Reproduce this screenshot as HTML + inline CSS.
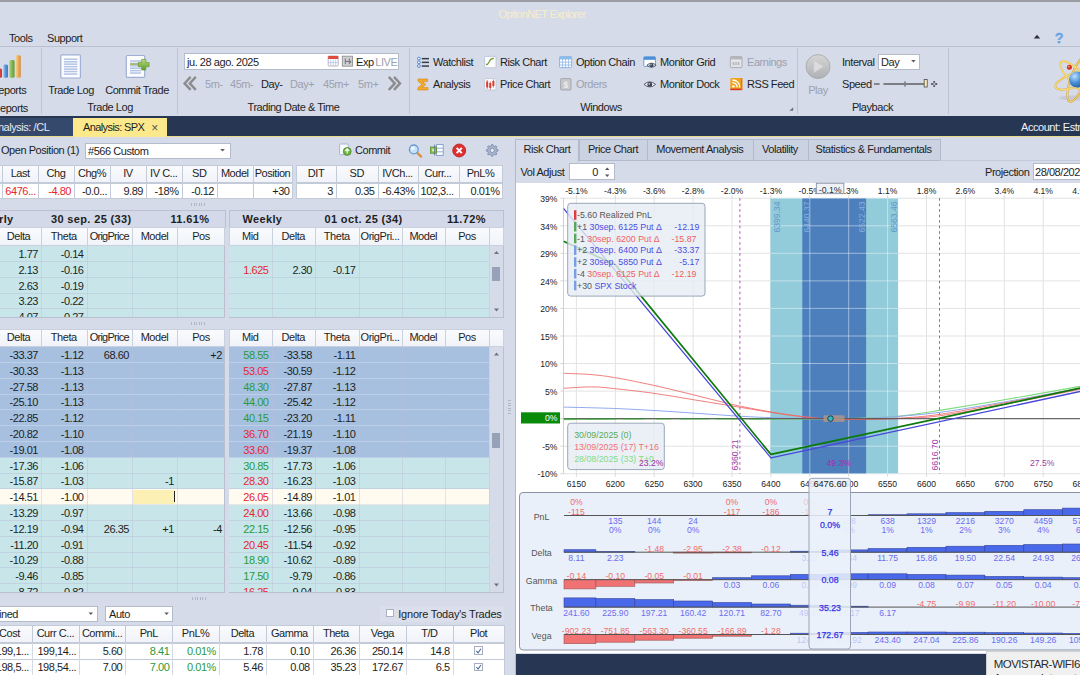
<!DOCTYPE html><html><head><meta charset="utf-8"><title>OptionNET Explorer</title><style>
html,body{margin:0;padding:0;}
body{width:1080px;height:675px;overflow:hidden;background:#d5dbe9;position:relative;
 font-family:"Liberation Sans",sans-serif;font-size:11px;color:#1e1e1e;letter-spacing:-0.45px;}
.r{position:absolute;box-sizing:border-box;}
.t{position:absolute;white-space:nowrap;line-height:14px;height:14px;margin-top:-7px;overflow:visible;}
.g{color:#9ba1af;}
.b{font-weight:bold;letter-spacing:0.35px;}
.red{color:#e6282e;}
.grn{color:#2c9a3c;}
.cell{position:absolute;box-sizing:border-box;overflow:hidden;white-space:nowrap;line-height:15px;}
svg{position:absolute;left:0;top:0;}
svg text{font-family:"Liberation Sans",sans-serif;letter-spacing:0;}
</style></head><body>
<div class="r " style="left:0px;top:0px;width:1080px;height:2px;background:#9c9ca4;"></div>
<div class="t " style="left:498.6px;top:14px;color:#f7eec6;letter-spacing:-.62px;">OptionNET Explorer</div>
<div class="t " style="left:9px;top:37.5px;">Tools</div>
<div class="t " style="left:47px;top:37.5px;">Support</div>
<div class="r " style="left:0px;top:46px;width:1080px;height:1px;background:#b9c0d0;"></div>
<div class="r " style="left:41px;top:48px;width:1px;height:66px;background:#bcc3d3;"></div>
<div class="r " style="left:177px;top:48px;width:1px;height:66px;background:#bcc3d3;"></div>
<div class="r " style="left:409px;top:48px;width:1px;height:66px;background:#bcc3d3;"></div>
<div class="r " style="left:797px;top:48px;width:1px;height:66px;background:#bcc3d3;"></div>
<div class="r " style="left:948px;top:48px;width:1px;height:66px;background:#bcc3d3;"></div>
<div class="t " style="left:-1.7px;top:90px;">eports</div>
<div class="t " style="left:0px;top:107.5px;">eports</div>
<div class="t " style="left:71px;top:90px;width:0px;transform:translateX(-50%);width:auto;">Trade Log</div>
<div class="t " style="left:137px;top:90px;transform:translateX(-50%);">Commit Trade</div>
<div class="t " style="left:110px;top:107px;transform:translateX(-50%);">Trade Log</div>
<div class="t " style="left:293.5px;top:107px;transform:translateX(-50%);">Trading Date &amp; Time</div>
<div class="t " style="left:601px;top:107px;transform:translateX(-50%);">Windows</div>
<div class="t " style="left:872.5px;top:107px;transform:translateX(-50%);">Playback</div>
<div class="r " style="left:184px;top:53px;width:215px;height:17px;background:#fff;border:1px solid #b4bccb;"></div>
<div class="t " style="left:187px;top:61.5px;">ju. 28 ago. 2025</div>
<div class="t " style="left:356px;top:61.5px;">Exp</div>
<div class="t g" style="left:375.3px;top:61.5px;">LIVE</div>
<div class="t g" style="left:205px;top:84px;">5m-</div>
<div class="t g" style="left:230px;top:84px;">45m-</div>
<div class="t " style="left:261px;top:84px;">Day-</div>
<div class="t g" style="left:290px;top:84px;">Day+</div>
<div class="t g" style="left:323px;top:84px;">45m+</div>
<div class="t g" style="left:358px;top:84px;">5m+</div>
<div class="t " style="left:433px;top:62px;">Watchlist</div>
<div class="t " style="left:500px;top:62px;">Risk Chart</div>
<div class="t " style="left:576px;top:62px;">Option Chain</div>
<div class="t " style="left:660px;top:62px;">Monitor Grid</div>
<div class="t g" style="left:747px;top:62px;">Earnings</div>
<div class="t " style="left:433px;top:84px;">Analysis</div>
<div class="t " style="left:500px;top:84px;">Price Chart</div>
<div class="t g" style="left:576px;top:84px;">Orders</div>
<div class="t " style="left:660px;top:84px;">Monitor Dock</div>
<div class="t " style="left:747px;top:84px;">RSS Feed</div>
<div class="t g" style="left:818px;top:90px;transform:translateX(-50%);">Play</div>
<div class="t " style="left:842px;top:62px;">Interval</div>
<div class="r " style="left:878px;top:54px;width:42px;height:16px;background:#fff;border:1px solid #b4bccb;"></div>
<div class="t " style="left:881px;top:62px;">Day</div>
<div class="t " style="left:842px;top:84px;">Speed</div>
<div class="r " style="left:0px;top:116px;width:1080px;height:20px;background:#273653;"></div>
<div class="r " style="left:0px;top:136px;width:1080px;height:1px;background:#e9d98a;"></div>
<div class="r " style="left:0px;top:117.5px;width:73px;height:18.5px;background:#35496d;"></div>
<div class="t " style="left:-9px;top:127px;color:#e6eaf2;">Analysis: /CL</div>
<div class="r " style="left:73px;top:117.5px;width:94px;height:19.5px;background:#fbe98c;"></div>
<div class="t " style="left:83px;top:127px;letter-spacing:-.6px">Analysis: SPX</div>
<div class="t " style="left:151.2px;top:127.6px;color:#555;font-size:12px;">×</div>
<div class="t " style="left:1021px;top:127px;color:#f0f2f6;">Account: Estr</div>
<div class="t " style="left:1px;top:150px;">Open Position (1)</div>
<div class="r " style="left:85px;top:142.5px;width:145.5px;height:16px;background:#fff;border:1px solid #b4bccb;"></div>
<div class="t " style="left:88px;top:150.5px;">#566 Custom</div>
<div class="t " style="left:355px;top:150px;">Commit</div>
<div class="r " style="left:-10px;top:165.3px;width:302.5px;height:17.899999999999977px;background:linear-gradient(#fafbfd,#f0f3f9);border:1px solid #c3cad8;"></div>
<div class="cell " style="left:-10px;top:165.3px;width:12.3px;height:17.299999999999983px;line-height:17.299999999999983px;text-align:center;"></div>
<div class="cell " style="left:2.3px;top:165.3px;width:35.7px;height:17.299999999999983px;line-height:17.299999999999983px;text-align:center;">Last</div>
<div class="cell " style="left:38px;top:165.3px;width:36px;height:17.299999999999983px;line-height:17.299999999999983px;text-align:center;">Chg</div>
<div class="cell " style="left:74px;top:165.3px;width:36px;height:17.299999999999983px;line-height:17.299999999999983px;text-align:center;">Chg%</div>
<div class="cell " style="left:110px;top:165.3px;width:36px;height:17.299999999999983px;line-height:17.299999999999983px;text-align:center;">IV</div>
<div class="cell " style="left:146px;top:165.3px;width:35.5px;height:17.299999999999983px;line-height:17.299999999999983px;text-align:center;">IV C...</div>
<div class="cell " style="left:181.5px;top:165.3px;width:35.5px;height:17.299999999999983px;line-height:17.299999999999983px;text-align:center;">SD</div>
<div class="cell " style="left:217px;top:165.3px;width:35.5px;height:17.299999999999983px;line-height:17.299999999999983px;text-align:center;">Model</div>
<div class="cell " style="left:252.5px;top:165.3px;width:40.0px;height:17.299999999999983px;line-height:17.299999999999983px;text-align:center;">Position</div>
<div class="r " style="left:2.3px;top:165.3px;width:1px;height:17.899999999999977px;background:#c3cad8;"></div>
<div class="r " style="left:38px;top:165.3px;width:1px;height:17.899999999999977px;background:#c3cad8;"></div>
<div class="r " style="left:74px;top:165.3px;width:1px;height:17.899999999999977px;background:#c3cad8;"></div>
<div class="r " style="left:110px;top:165.3px;width:1px;height:17.899999999999977px;background:#c3cad8;"></div>
<div class="r " style="left:146px;top:165.3px;width:1px;height:17.899999999999977px;background:#c3cad8;"></div>
<div class="r " style="left:181.5px;top:165.3px;width:1px;height:17.899999999999977px;background:#c3cad8;"></div>
<div class="r " style="left:217px;top:165.3px;width:1px;height:17.899999999999977px;background:#c3cad8;"></div>
<div class="r " style="left:252.5px;top:165.3px;width:1px;height:17.899999999999977px;background:#c3cad8;"></div>
<div class="r " style="left:-10px;top:182.7px;width:302.5px;height:16.2px;background:#fff;border:1px solid #c3cad8;"></div>
<div class="cell " style="left:-10px;top:183.6px;width:12.3px;height:15.800000000000011px;line-height:15.800000000000011px;text-align:;"></div>
<div class="cell red" style="left:2.3px;top:183.6px;width:35.7px;height:15.800000000000011px;line-height:15.800000000000011px;text-align:left;padding-left:3px;">6476...</div>
<div class="cell red" style="left:38px;top:183.6px;width:36px;height:15.800000000000011px;line-height:15.800000000000011px;text-align:right;padding-right:3px;">-4.80</div>
<div class="cell " style="left:74px;top:183.6px;width:36px;height:15.800000000000011px;line-height:15.800000000000011px;text-align:right;padding-right:3px;">-0.0...</div>
<div class="cell " style="left:110px;top:183.6px;width:36px;height:15.800000000000011px;line-height:15.800000000000011px;text-align:right;padding-right:3px;">9.89</div>
<div class="cell " style="left:146px;top:183.6px;width:35.5px;height:15.800000000000011px;line-height:15.800000000000011px;text-align:right;padding-right:3px;">-18%</div>
<div class="cell " style="left:181.5px;top:183.6px;width:35.5px;height:15.800000000000011px;line-height:15.800000000000011px;text-align:right;padding-right:3px;">-0.12</div>
<div class="cell " style="left:217px;top:183.6px;width:35.5px;height:15.800000000000011px;line-height:15.800000000000011px;text-align:right;padding-right:3px;"></div>
<div class="cell " style="left:252.5px;top:183.6px;width:40.0px;height:15.800000000000011px;line-height:15.800000000000011px;text-align:right;padding-right:3px;">+30</div>
<div class="r " style="left:2.3px;top:183px;width:1px;height:15.6px;background:#c3cad8;"></div>
<div class="r " style="left:38px;top:183px;width:1px;height:15.6px;background:#c3cad8;"></div>
<div class="r " style="left:74px;top:183px;width:1px;height:15.6px;background:#c3cad8;"></div>
<div class="r " style="left:110px;top:183px;width:1px;height:15.6px;background:#c3cad8;"></div>
<div class="r " style="left:146px;top:183px;width:1px;height:15.6px;background:#c3cad8;"></div>
<div class="r " style="left:181.5px;top:183px;width:1px;height:15.6px;background:#c3cad8;"></div>
<div class="r " style="left:217px;top:183px;width:1px;height:15.6px;background:#c3cad8;"></div>
<div class="r " style="left:252.5px;top:183px;width:1px;height:15.6px;background:#c3cad8;"></div>
<div class="r " style="left:296px;top:165.3px;width:206.5px;height:17.899999999999977px;background:linear-gradient(#fafbfd,#f0f3f9);border:1px solid #c3cad8;"></div>
<div class="cell " style="left:296px;top:165.3px;width:40px;height:17.299999999999983px;line-height:17.299999999999983px;text-align:center;">DIT</div>
<div class="cell " style="left:336px;top:165.3px;width:41.5px;height:17.299999999999983px;line-height:17.299999999999983px;text-align:center;">SD</div>
<div class="cell " style="left:377.5px;top:165.3px;width:40.0px;height:17.299999999999983px;line-height:17.299999999999983px;text-align:center;">IVCh...</div>
<div class="cell " style="left:417.5px;top:165.3px;width:41.0px;height:17.299999999999983px;line-height:17.299999999999983px;text-align:center;">Curr...</div>
<div class="cell " style="left:458.5px;top:165.3px;width:44.0px;height:17.299999999999983px;line-height:17.299999999999983px;text-align:center;">PnL%</div>
<div class="r " style="left:336px;top:165.3px;width:1px;height:17.899999999999977px;background:#c3cad8;"></div>
<div class="r " style="left:377.5px;top:165.3px;width:1px;height:17.899999999999977px;background:#c3cad8;"></div>
<div class="r " style="left:417.5px;top:165.3px;width:1px;height:17.899999999999977px;background:#c3cad8;"></div>
<div class="r " style="left:458.5px;top:165.3px;width:1px;height:17.899999999999977px;background:#c3cad8;"></div>
<div class="r " style="left:296px;top:182.7px;width:206.5px;height:16.2px;background:#fff;border:1px solid #c3cad8;"></div>
<div class="cell " style="left:296px;top:183.6px;width:40px;height:15.800000000000011px;line-height:15.800000000000011px;text-align:right;padding-right:3px;">3</div>
<div class="cell " style="left:336px;top:183.6px;width:41.5px;height:15.800000000000011px;line-height:15.800000000000011px;text-align:right;padding-right:3px;">0.35</div>
<div class="cell " style="left:377.5px;top:183.6px;width:40.0px;height:15.800000000000011px;line-height:15.800000000000011px;text-align:right;padding-right:3px;">-6.43%</div>
<div class="cell " style="left:417.5px;top:183.6px;width:41.0px;height:15.800000000000011px;line-height:15.800000000000011px;text-align:left;padding-left:3px;">102,3...</div>
<div class="cell " style="left:458.5px;top:183.6px;width:44.0px;height:15.800000000000011px;line-height:15.800000000000011px;text-align:right;padding-right:3px;">0.01%</div>
<div class="r " style="left:336px;top:183px;width:1px;height:15.6px;background:#c3cad8;"></div>
<div class="r " style="left:377.5px;top:183px;width:1px;height:15.6px;background:#c3cad8;"></div>
<div class="r " style="left:417.5px;top:183px;width:1px;height:15.6px;background:#c3cad8;"></div>
<div class="r " style="left:458.5px;top:183px;width:1px;height:15.6px;background:#c3cad8;"></div>
<div class="r " style="left:191px;top:202.5px;width:14px;height:3px;background:repeating-linear-gradient(90deg,#aab2c4 0 1px,transparent 1px 2.5px);opacity:.9;"></div>
<div class="r " style="left:191px;top:322.0px;width:14px;height:3px;background:repeating-linear-gradient(90deg,#aab2c4 0 1px,transparent 1px 2.5px);opacity:.9;"></div>
<div class="r " style="left:192px;top:596.5px;width:14px;height:3px;background:repeating-linear-gradient(90deg,#aab2c4 0 1px,transparent 1px 2.5px);opacity:.9;"></div>
<div class="r " style="left:508.0px;top:400px;width:3px;height:14px;background:repeating-linear-gradient(0deg,#aab2c4 0 1px,transparent 1px 2.5px);opacity:.9;"></div>
<div class="r " style="left:-4px;top:209.5px;width:229.5px;height:18.30000000000001px;background:#d3d9e8;border:1px solid #b9c0d0;"></div>
<div class="t b" style="left:-1px;top:219.15px;">rly</div>
<div class="t b" style="left:51px;top:219.15px;">30 sep. 25 (33)</div>
<div class="t b" style="left:170.5px;top:219.15px;">11.61%</div>
<div class="r " style="left:229px;top:209.5px;width:274.5px;height:18.30000000000001px;background:#d3d9e8;border:1px solid #b9c0d0;"></div>
<div class="t b" style="left:242.5px;top:219.15px;">Weekly</div>
<div class="t b" style="left:324.5px;top:219.15px;">01 oct. 25 (34)</div>
<div class="t b" style="left:447px;top:219.15px;">11.72%</div>
<div class="r " style="left:-4px;top:227.3px;width:229px;height:18.69999999999999px;background:linear-gradient(#fafbfd,#f0f3f9);border:1px solid #c9d0de;"></div>
<div class="cell " style="left:-4px;top:227.3px;width:45px;height:18.099999999999994px;line-height:18.099999999999994px;text-align:center;">Delta</div>
<div class="cell " style="left:41px;top:227.3px;width:45.5px;height:18.099999999999994px;line-height:18.099999999999994px;text-align:center;">Theta</div>
<div class="cell " style="left:86.5px;top:227.3px;width:45.5px;height:18.099999999999994px;line-height:18.099999999999994px;text-align:center;letter-spacing:-.75px;">OrigPrice</div>
<div class="cell " style="left:132px;top:227.3px;width:45px;height:18.099999999999994px;line-height:18.099999999999994px;text-align:center;">Model</div>
<div class="cell " style="left:177px;top:227.3px;width:48px;height:18.099999999999994px;line-height:18.099999999999994px;text-align:center;">Pos</div>
<div class="r " style="left:41px;top:227.3px;width:1px;height:18.69999999999999px;background:#c9d0de;"></div>
<div class="r " style="left:86.5px;top:227.3px;width:1px;height:18.69999999999999px;background:#c9d0de;"></div>
<div class="r " style="left:132px;top:227.3px;width:1px;height:18.69999999999999px;background:#c9d0de;"></div>
<div class="r " style="left:177px;top:227.3px;width:1px;height:18.69999999999999px;background:#c9d0de;"></div>
<div class="r " style="left:229px;top:227.3px;width:274.5px;height:18.69999999999999px;background:linear-gradient(#fafbfd,#f0f3f9);border:1px solid #c9d0de;"></div>
<div class="cell " style="left:229px;top:227.3px;width:42.5px;height:18.099999999999994px;line-height:18.099999999999994px;text-align:center;">Mid</div>
<div class="cell " style="left:271.5px;top:227.3px;width:43.5px;height:18.099999999999994px;line-height:18.099999999999994px;text-align:center;">Delta</div>
<div class="cell " style="left:315px;top:227.3px;width:43.5px;height:18.099999999999994px;line-height:18.099999999999994px;text-align:center;">Theta</div>
<div class="cell " style="left:358.5px;top:227.3px;width:43.0px;height:18.099999999999994px;line-height:18.099999999999994px;text-align:center;">OrigPri...</div>
<div class="cell " style="left:401.5px;top:227.3px;width:43.5px;height:18.099999999999994px;line-height:18.099999999999994px;text-align:center;">Model</div>
<div class="cell " style="left:445px;top:227.3px;width:44px;height:18.099999999999994px;line-height:18.099999999999994px;text-align:center;">Pos</div>
<div class="cell " style="left:489px;top:227.3px;width:14.5px;height:18.099999999999994px;line-height:18.099999999999994px;text-align:center;"></div>
<div class="r " style="left:271.5px;top:227.3px;width:1px;height:18.69999999999999px;background:#c9d0de;"></div>
<div class="r " style="left:315px;top:227.3px;width:1px;height:18.69999999999999px;background:#c9d0de;"></div>
<div class="r " style="left:358.5px;top:227.3px;width:1px;height:18.69999999999999px;background:#c9d0de;"></div>
<div class="r " style="left:401.5px;top:227.3px;width:1px;height:18.69999999999999px;background:#c9d0de;"></div>
<div class="r " style="left:445px;top:227.3px;width:1px;height:18.69999999999999px;background:#c9d0de;"></div>
<div class="r " style="left:489px;top:227.3px;width:1px;height:18.69999999999999px;background:#c9d0de;"></div>
<div class="r" style="left:-4px;top:246px;width:229px;height:71.5px;overflow:hidden;border-right:1px solid #b9c0d0;border-bottom:1px solid #b9c0d0;background:#c8e6ea;">
<div class="r" style="left:0;top:0.0px;width:229px;height:16.5px;background:#c8e6ea;"></div>
<div class="cell " style="left:0px;top:0.0px;width:45px;height:15.8px;line-height:16.2px;text-align:right;padding-right:3px;">1.77</div>
<div class="cell " style="left:45px;top:0.0px;width:45.5px;height:15.8px;line-height:16.2px;text-align:right;padding-right:3px;">-0.14</div>
<div class="r" style="left:0;top:15.8px;width:229px;height:16.5px;background:#c8e6ea;"></div>
<div class="cell " style="left:0px;top:15.8px;width:45px;height:15.8px;line-height:16.2px;text-align:right;padding-right:3px;">2.13</div>
<div class="cell " style="left:45px;top:15.8px;width:45.5px;height:15.8px;line-height:16.2px;text-align:right;padding-right:3px;">-0.16</div>
<div class="r" style="left:0;top:31.6px;width:229px;height:16.5px;background:#c8e6ea;"></div>
<div class="cell " style="left:0px;top:31.6px;width:45px;height:15.8px;line-height:16.2px;text-align:right;padding-right:3px;">2.63</div>
<div class="cell " style="left:45px;top:31.6px;width:45.5px;height:15.8px;line-height:16.2px;text-align:right;padding-right:3px;">-0.19</div>
<div class="r" style="left:0;top:47.4px;width:229px;height:16.5px;background:#c8e6ea;"></div>
<div class="cell " style="left:0px;top:47.4px;width:45px;height:15.8px;line-height:16.2px;text-align:right;padding-right:3px;">3.23</div>
<div class="cell " style="left:45px;top:47.4px;width:45.5px;height:15.8px;line-height:16.2px;text-align:right;padding-right:3px;">-0.22</div>
<div class="r" style="left:0;top:63.2px;width:229px;height:16.5px;background:#c8e6ea;"></div>
<div class="cell " style="left:0px;top:63.2px;width:45px;height:15.8px;line-height:16.2px;text-align:right;padding-right:3px;">4.07</div>
<div class="cell " style="left:45px;top:63.2px;width:45.5px;height:15.8px;line-height:16.2px;text-align:right;padding-right:3px;">-0.27</div>
<div class="r" style="left:0;top:15.0px;width:229px;height:1px;background:rgba(185,190,215,.5);"></div>
<div class="r" style="left:0;top:30.8px;width:229px;height:1px;background:rgba(185,190,215,.5);"></div>
<div class="r" style="left:0;top:46.6px;width:229px;height:1px;background:rgba(185,190,215,.5);"></div>
<div class="r" style="left:0;top:62.4px;width:229px;height:1px;background:rgba(185,190,215,.5);"></div>
<div class="r" style="left:0;top:78.2px;width:229px;height:1px;background:rgba(185,190,215,.5);"></div>
<div class="r" style="left:45px;top:0;width:1px;height:71.5px;background:rgba(190,190,215,.42);"></div>
<div class="r" style="left:90.5px;top:0;width:1px;height:71.5px;background:rgba(190,190,215,.42);"></div>
<div class="r" style="left:136px;top:0;width:1px;height:71.5px;background:rgba(190,190,215,.42);"></div>
<div class="r" style="left:181px;top:0;width:1px;height:71.5px;background:rgba(190,190,215,.42);"></div>
</div>
<div class="r" style="left:229px;top:246px;width:274.5px;height:71.5px;overflow:hidden;border-right:1px solid #b9c0d0;border-bottom:1px solid #b9c0d0;background:#c8e6ea;">
<div class="r" style="left:0;top:0.0px;width:260px;height:16.5px;background:#c8e6ea;"></div>
<div class="r" style="left:0;top:15.8px;width:260px;height:16.5px;background:#c8e6ea;"></div>
<div class="cell red" style="left:0px;top:15.8px;width:42.5px;height:15.8px;line-height:16.2px;text-align:right;padding-right:3px;">1.625</div>
<div class="cell " style="left:42.5px;top:15.8px;width:43.5px;height:15.8px;line-height:16.2px;text-align:right;padding-right:3px;">2.30</div>
<div class="cell " style="left:86px;top:15.8px;width:43.5px;height:15.8px;line-height:16.2px;text-align:right;padding-right:3px;">-0.17</div>
<div class="r" style="left:0;top:31.6px;width:260px;height:16.5px;background:#c8e6ea;"></div>
<div class="r" style="left:0;top:47.4px;width:260px;height:16.5px;background:#c8e6ea;"></div>
<div class="r" style="left:0;top:63.2px;width:260px;height:16.5px;background:#c8e6ea;"></div>
<div class="r" style="left:0;top:15.0px;width:260px;height:1px;background:rgba(185,190,215,.5);"></div>
<div class="r" style="left:0;top:30.8px;width:260px;height:1px;background:rgba(185,190,215,.5);"></div>
<div class="r" style="left:0;top:46.6px;width:260px;height:1px;background:rgba(185,190,215,.5);"></div>
<div class="r" style="left:0;top:62.4px;width:260px;height:1px;background:rgba(185,190,215,.5);"></div>
<div class="r" style="left:0;top:78.2px;width:260px;height:1px;background:rgba(185,190,215,.5);"></div>
<div class="r" style="left:42.5px;top:0;width:1px;height:71.5px;background:rgba(190,190,215,.42);"></div>
<div class="r" style="left:86px;top:0;width:1px;height:71.5px;background:rgba(190,190,215,.42);"></div>
<div class="r" style="left:129.5px;top:0;width:1px;height:71.5px;background:rgba(190,190,215,.42);"></div>
<div class="r" style="left:172.5px;top:0;width:1px;height:71.5px;background:rgba(190,190,215,.42);"></div>
<div class="r" style="left:216px;top:0;width:1px;height:71.5px;background:rgba(190,190,215,.42);"></div>
<div class="r" style="left:260px;top:0;width:1px;height:71.5px;background:rgba(190,190,215,.42);"></div>
<div class="r" style="left:261px;top:0;width:13.5px;height:71.5px;background:#d5dbe9;"></div>
</div>
<div class="r " style="left:-4px;top:328.5px;width:229px;height:18.5px;background:linear-gradient(#fafbfd,#f0f3f9);border:1px solid #c9d0de;"></div>
<div class="cell " style="left:-4px;top:328.5px;width:45px;height:17.899999999999977px;line-height:17.899999999999977px;text-align:center;">Delta</div>
<div class="cell " style="left:41px;top:328.5px;width:45.5px;height:17.899999999999977px;line-height:17.899999999999977px;text-align:center;">Theta</div>
<div class="cell " style="left:86.5px;top:328.5px;width:45.5px;height:17.899999999999977px;line-height:17.899999999999977px;text-align:center;letter-spacing:-.75px;">OrigPrice</div>
<div class="cell " style="left:132px;top:328.5px;width:45px;height:17.899999999999977px;line-height:17.899999999999977px;text-align:center;">Model</div>
<div class="cell " style="left:177px;top:328.5px;width:48px;height:17.899999999999977px;line-height:17.899999999999977px;text-align:center;">Pos</div>
<div class="r " style="left:41px;top:328.5px;width:1px;height:18.5px;background:#c9d0de;"></div>
<div class="r " style="left:86.5px;top:328.5px;width:1px;height:18.5px;background:#c9d0de;"></div>
<div class="r " style="left:132px;top:328.5px;width:1px;height:18.5px;background:#c9d0de;"></div>
<div class="r " style="left:177px;top:328.5px;width:1px;height:18.5px;background:#c9d0de;"></div>
<div class="r " style="left:229px;top:328.5px;width:274.5px;height:18.5px;background:linear-gradient(#fafbfd,#f0f3f9);border:1px solid #c9d0de;"></div>
<div class="cell " style="left:229px;top:328.5px;width:42.5px;height:17.899999999999977px;line-height:17.899999999999977px;text-align:center;">Mid</div>
<div class="cell " style="left:271.5px;top:328.5px;width:43.5px;height:17.899999999999977px;line-height:17.899999999999977px;text-align:center;">Delta</div>
<div class="cell " style="left:315px;top:328.5px;width:43.5px;height:17.899999999999977px;line-height:17.899999999999977px;text-align:center;">Theta</div>
<div class="cell " style="left:358.5px;top:328.5px;width:43.0px;height:17.899999999999977px;line-height:17.899999999999977px;text-align:center;">OrigPri...</div>
<div class="cell " style="left:401.5px;top:328.5px;width:43.5px;height:17.899999999999977px;line-height:17.899999999999977px;text-align:center;">Model</div>
<div class="cell " style="left:445px;top:328.5px;width:44px;height:17.899999999999977px;line-height:17.899999999999977px;text-align:center;">Pos</div>
<div class="cell " style="left:489px;top:328.5px;width:14.5px;height:17.899999999999977px;line-height:17.899999999999977px;text-align:center;"></div>
<div class="r " style="left:271.5px;top:328.5px;width:1px;height:18.5px;background:#c9d0de;"></div>
<div class="r " style="left:315px;top:328.5px;width:1px;height:18.5px;background:#c9d0de;"></div>
<div class="r " style="left:358.5px;top:328.5px;width:1px;height:18.5px;background:#c9d0de;"></div>
<div class="r " style="left:401.5px;top:328.5px;width:1px;height:18.5px;background:#c9d0de;"></div>
<div class="r " style="left:445px;top:328.5px;width:1px;height:18.5px;background:#c9d0de;"></div>
<div class="r " style="left:489px;top:328.5px;width:1px;height:18.5px;background:#c9d0de;"></div>
<div class="r" style="left:-4px;top:347px;width:229px;height:245.5px;overflow:hidden;border-right:1px solid #b9c0d0;border-bottom:1px solid #b9c0d0;background:#c8e6ea;">
<div class="r" style="left:0;top:0.0px;width:229px;height:16.5px;background:#a7c0e0;"></div>
<div class="cell " style="left:0px;top:0.0px;width:45px;height:15.8px;line-height:16.2px;text-align:right;padding-right:3px;">-33.37</div>
<div class="cell " style="left:45px;top:0.0px;width:45.5px;height:15.8px;line-height:16.2px;text-align:right;padding-right:3px;">-1.12</div>
<div class="cell " style="left:90.5px;top:0.0px;width:45.5px;height:15.8px;line-height:16.2px;text-align:right;padding-right:3px;">68.60</div>
<div class="cell " style="left:181px;top:0.0px;width:48px;height:15.8px;line-height:16.2px;text-align:right;padding-right:3px;">+2</div>
<div class="r" style="left:0;top:15.8px;width:229px;height:16.5px;background:#a7c0e0;"></div>
<div class="cell " style="left:0px;top:15.8px;width:45px;height:15.8px;line-height:16.2px;text-align:right;padding-right:3px;">-30.33</div>
<div class="cell " style="left:45px;top:15.8px;width:45.5px;height:15.8px;line-height:16.2px;text-align:right;padding-right:3px;">-1.13</div>
<div class="r" style="left:0;top:31.6px;width:229px;height:16.5px;background:#a7c0e0;"></div>
<div class="cell " style="left:0px;top:31.6px;width:45px;height:15.8px;line-height:16.2px;text-align:right;padding-right:3px;">-27.58</div>
<div class="cell " style="left:45px;top:31.6px;width:45.5px;height:15.8px;line-height:16.2px;text-align:right;padding-right:3px;">-1.13</div>
<div class="r" style="left:0;top:47.4px;width:229px;height:16.5px;background:#a7c0e0;"></div>
<div class="cell " style="left:0px;top:47.4px;width:45px;height:15.8px;line-height:16.2px;text-align:right;padding-right:3px;">-25.10</div>
<div class="cell " style="left:45px;top:47.4px;width:45.5px;height:15.8px;line-height:16.2px;text-align:right;padding-right:3px;">-1.13</div>
<div class="r" style="left:0;top:63.2px;width:229px;height:16.5px;background:#a7c0e0;"></div>
<div class="cell " style="left:0px;top:63.2px;width:45px;height:15.8px;line-height:16.2px;text-align:right;padding-right:3px;">-22.85</div>
<div class="cell " style="left:45px;top:63.2px;width:45.5px;height:15.8px;line-height:16.2px;text-align:right;padding-right:3px;">-1.12</div>
<div class="r" style="left:0;top:79.0px;width:229px;height:16.5px;background:#a7c0e0;"></div>
<div class="cell " style="left:0px;top:79.0px;width:45px;height:15.8px;line-height:16.2px;text-align:right;padding-right:3px;">-20.82</div>
<div class="cell " style="left:45px;top:79.0px;width:45.5px;height:15.8px;line-height:16.2px;text-align:right;padding-right:3px;">-1.10</div>
<div class="r" style="left:0;top:94.8px;width:229px;height:16.5px;background:#a7c0e0;"></div>
<div class="cell " style="left:0px;top:94.8px;width:45px;height:15.8px;line-height:16.2px;text-align:right;padding-right:3px;">-19.01</div>
<div class="cell " style="left:45px;top:94.8px;width:45.5px;height:15.8px;line-height:16.2px;text-align:right;padding-right:3px;">-1.08</div>
<div class="r" style="left:0;top:110.6px;width:229px;height:16.5px;background:#c8e6ea;"></div>
<div class="cell " style="left:0px;top:110.6px;width:45px;height:15.8px;line-height:16.2px;text-align:right;padding-right:3px;">-17.36</div>
<div class="cell " style="left:45px;top:110.6px;width:45.5px;height:15.8px;line-height:16.2px;text-align:right;padding-right:3px;">-1.06</div>
<div class="r" style="left:0;top:126.4px;width:229px;height:16.5px;background:#c8e6ea;"></div>
<div class="cell " style="left:0px;top:126.4px;width:45px;height:15.8px;line-height:16.2px;text-align:right;padding-right:3px;">-15.87</div>
<div class="cell " style="left:45px;top:126.4px;width:45.5px;height:15.8px;line-height:16.2px;text-align:right;padding-right:3px;">-1.03</div>
<div class="cell " style="left:136px;top:126.4px;width:45px;height:15.8px;line-height:16.2px;text-align:right;padding-right:3px;">-1</div>
<div class="r" style="left:0;top:142.2px;width:229px;height:16.5px;background:#fffbf0;"></div>
<div class="cell " style="left:0px;top:142.2px;width:45px;height:15.8px;line-height:16.2px;text-align:right;padding-right:3px;">-14.51</div>
<div class="cell " style="left:45px;top:142.2px;width:45.5px;height:15.8px;line-height:16.2px;text-align:right;padding-right:3px;">-1.00</div>
<div class="r" style="left:0;top:158.0px;width:229px;height:16.5px;background:#c8e6ea;"></div>
<div class="cell " style="left:0px;top:158.0px;width:45px;height:15.8px;line-height:16.2px;text-align:right;padding-right:3px;">-13.29</div>
<div class="cell " style="left:45px;top:158.0px;width:45.5px;height:15.8px;line-height:16.2px;text-align:right;padding-right:3px;">-0.97</div>
<div class="r" style="left:0;top:173.8px;width:229px;height:16.5px;background:#c8e6ea;"></div>
<div class="cell " style="left:0px;top:173.8px;width:45px;height:15.8px;line-height:16.2px;text-align:right;padding-right:3px;">-12.19</div>
<div class="cell " style="left:45px;top:173.8px;width:45.5px;height:15.8px;line-height:16.2px;text-align:right;padding-right:3px;">-0.94</div>
<div class="cell " style="left:90.5px;top:173.8px;width:45.5px;height:15.8px;line-height:16.2px;text-align:right;padding-right:3px;">26.35</div>
<div class="cell " style="left:136px;top:173.8px;width:45px;height:15.8px;line-height:16.2px;text-align:right;padding-right:3px;">+1</div>
<div class="cell " style="left:181px;top:173.8px;width:48px;height:15.8px;line-height:16.2px;text-align:right;padding-right:3px;">-4</div>
<div class="r" style="left:0;top:189.6px;width:229px;height:16.5px;background:#c8e6ea;"></div>
<div class="cell " style="left:0px;top:189.6px;width:45px;height:15.8px;line-height:16.2px;text-align:right;padding-right:3px;">-11.20</div>
<div class="cell " style="left:45px;top:189.6px;width:45.5px;height:15.8px;line-height:16.2px;text-align:right;padding-right:3px;">-0.91</div>
<div class="r" style="left:0;top:205.4px;width:229px;height:16.5px;background:#c8e6ea;"></div>
<div class="cell " style="left:0px;top:205.4px;width:45px;height:15.8px;line-height:16.2px;text-align:right;padding-right:3px;">-10.29</div>
<div class="cell " style="left:45px;top:205.4px;width:45.5px;height:15.8px;line-height:16.2px;text-align:right;padding-right:3px;">-0.88</div>
<div class="r" style="left:0;top:221.2px;width:229px;height:16.5px;background:#c8e6ea;"></div>
<div class="cell " style="left:0px;top:221.2px;width:45px;height:15.8px;line-height:16.2px;text-align:right;padding-right:3px;">-9.46</div>
<div class="cell " style="left:45px;top:221.2px;width:45.5px;height:15.8px;line-height:16.2px;text-align:right;padding-right:3px;">-0.85</div>
<div class="r" style="left:0;top:237.0px;width:229px;height:16.5px;background:#c8e6ea;"></div>
<div class="cell " style="left:0px;top:237.0px;width:45px;height:15.8px;line-height:16.2px;text-align:right;padding-right:3px;">-8.72</div>
<div class="cell " style="left:45px;top:237.0px;width:45.5px;height:15.8px;line-height:16.2px;text-align:right;padding-right:3px;">-0.82</div>
<div class="r" style="left:0;top:15.0px;width:229px;height:1px;background:rgba(200,214,236,.7);"></div>
<div class="r" style="left:0;top:30.8px;width:229px;height:1px;background:rgba(200,214,236,.7);"></div>
<div class="r" style="left:0;top:46.6px;width:229px;height:1px;background:rgba(200,214,236,.7);"></div>
<div class="r" style="left:0;top:62.4px;width:229px;height:1px;background:rgba(200,214,236,.7);"></div>
<div class="r" style="left:0;top:78.2px;width:229px;height:1px;background:rgba(200,214,236,.7);"></div>
<div class="r" style="left:0;top:94.0px;width:229px;height:1px;background:rgba(200,214,236,.7);"></div>
<div class="r" style="left:0;top:109.8px;width:229px;height:1px;background:rgba(200,214,236,.7);"></div>
<div class="r" style="left:0;top:125.6px;width:229px;height:1px;background:rgba(185,190,215,.5);"></div>
<div class="r" style="left:0;top:141.4px;width:229px;height:1px;background:rgba(185,190,215,.5);"></div>
<div class="r" style="left:0;top:157.2px;width:229px;height:1px;background:rgba(210,210,215,.5);"></div>
<div class="r" style="left:0;top:173.0px;width:229px;height:1px;background:rgba(185,190,215,.5);"></div>
<div class="r" style="left:0;top:188.8px;width:229px;height:1px;background:rgba(185,190,215,.5);"></div>
<div class="r" style="left:0;top:204.6px;width:229px;height:1px;background:rgba(185,190,215,.5);"></div>
<div class="r" style="left:0;top:220.4px;width:229px;height:1px;background:rgba(185,190,215,.5);"></div>
<div class="r" style="left:0;top:236.2px;width:229px;height:1px;background:rgba(185,190,215,.5);"></div>
<div class="r" style="left:0;top:252.0px;width:229px;height:1px;background:rgba(185,190,215,.5);"></div>
<div class="r" style="left:45px;top:0;width:1px;height:245.5px;background:rgba(190,190,215,.42);"></div>
<div class="r" style="left:90.5px;top:0;width:1px;height:245.5px;background:rgba(190,190,215,.42);"></div>
<div class="r" style="left:136px;top:0;width:1px;height:245.5px;background:rgba(190,190,215,.42);"></div>
<div class="r" style="left:181px;top:0;width:1px;height:245.5px;background:rgba(190,190,215,.42);"></div>
</div>
<div class="r" style="left:229px;top:347px;width:274.5px;height:245.5px;overflow:hidden;border-right:1px solid #b9c0d0;border-bottom:1px solid #b9c0d0;background:#c8e6ea;">
<div class="r" style="left:0;top:0.0px;width:260px;height:16.5px;background:#a7c0e0;"></div>
<div class="cell grn" style="left:0px;top:0.0px;width:42.5px;height:15.8px;line-height:16.2px;text-align:right;padding-right:3px;">58.55</div>
<div class="cell " style="left:42.5px;top:0.0px;width:43.5px;height:15.8px;line-height:16.2px;text-align:right;padding-right:3px;">-33.58</div>
<div class="cell " style="left:86px;top:0.0px;width:43.5px;height:15.8px;line-height:16.2px;text-align:right;padding-right:3px;">-1.11</div>
<div class="r" style="left:0;top:15.8px;width:260px;height:16.5px;background:#a7c0e0;"></div>
<div class="cell red" style="left:0px;top:15.8px;width:42.5px;height:15.8px;line-height:16.2px;text-align:right;padding-right:3px;">53.05</div>
<div class="cell " style="left:42.5px;top:15.8px;width:43.5px;height:15.8px;line-height:16.2px;text-align:right;padding-right:3px;">-30.59</div>
<div class="cell " style="left:86px;top:15.8px;width:43.5px;height:15.8px;line-height:16.2px;text-align:right;padding-right:3px;">-1.12</div>
<div class="r" style="left:0;top:31.6px;width:260px;height:16.5px;background:#a7c0e0;"></div>
<div class="cell grn" style="left:0px;top:31.6px;width:42.5px;height:15.8px;line-height:16.2px;text-align:right;padding-right:3px;">48.30</div>
<div class="cell " style="left:42.5px;top:31.6px;width:43.5px;height:15.8px;line-height:16.2px;text-align:right;padding-right:3px;">-27.87</div>
<div class="cell " style="left:86px;top:31.6px;width:43.5px;height:15.8px;line-height:16.2px;text-align:right;padding-right:3px;">-1.13</div>
<div class="r" style="left:0;top:47.4px;width:260px;height:16.5px;background:#a7c0e0;"></div>
<div class="cell grn" style="left:0px;top:47.4px;width:42.5px;height:15.8px;line-height:16.2px;text-align:right;padding-right:3px;">44.00</div>
<div class="cell " style="left:42.5px;top:47.4px;width:43.5px;height:15.8px;line-height:16.2px;text-align:right;padding-right:3px;">-25.42</div>
<div class="cell " style="left:86px;top:47.4px;width:43.5px;height:15.8px;line-height:16.2px;text-align:right;padding-right:3px;">-1.12</div>
<div class="r" style="left:0;top:63.2px;width:260px;height:16.5px;background:#a7c0e0;"></div>
<div class="cell grn" style="left:0px;top:63.2px;width:42.5px;height:15.8px;line-height:16.2px;text-align:right;padding-right:3px;">40.15</div>
<div class="cell " style="left:42.5px;top:63.2px;width:43.5px;height:15.8px;line-height:16.2px;text-align:right;padding-right:3px;">-23.20</div>
<div class="cell " style="left:86px;top:63.2px;width:43.5px;height:15.8px;line-height:16.2px;text-align:right;padding-right:3px;">-1.11</div>
<div class="r" style="left:0;top:79.0px;width:260px;height:16.5px;background:#a7c0e0;"></div>
<div class="cell red" style="left:0px;top:79.0px;width:42.5px;height:15.8px;line-height:16.2px;text-align:right;padding-right:3px;">36.70</div>
<div class="cell " style="left:42.5px;top:79.0px;width:43.5px;height:15.8px;line-height:16.2px;text-align:right;padding-right:3px;">-21.19</div>
<div class="cell " style="left:86px;top:79.0px;width:43.5px;height:15.8px;line-height:16.2px;text-align:right;padding-right:3px;">-1.10</div>
<div class="r" style="left:0;top:94.8px;width:260px;height:16.5px;background:#a7c0e0;"></div>
<div class="cell red" style="left:0px;top:94.8px;width:42.5px;height:15.8px;line-height:16.2px;text-align:right;padding-right:3px;">33.60</div>
<div class="cell " style="left:42.5px;top:94.8px;width:43.5px;height:15.8px;line-height:16.2px;text-align:right;padding-right:3px;">-19.37</div>
<div class="cell " style="left:86px;top:94.8px;width:43.5px;height:15.8px;line-height:16.2px;text-align:right;padding-right:3px;">-1.08</div>
<div class="r" style="left:0;top:110.6px;width:260px;height:16.5px;background:#c8e6ea;"></div>
<div class="cell grn" style="left:0px;top:110.6px;width:42.5px;height:15.8px;line-height:16.2px;text-align:right;padding-right:3px;">30.85</div>
<div class="cell " style="left:42.5px;top:110.6px;width:43.5px;height:15.8px;line-height:16.2px;text-align:right;padding-right:3px;">-17.73</div>
<div class="cell " style="left:86px;top:110.6px;width:43.5px;height:15.8px;line-height:16.2px;text-align:right;padding-right:3px;">-1.06</div>
<div class="r" style="left:0;top:126.4px;width:260px;height:16.5px;background:#c8e6ea;"></div>
<div class="cell red" style="left:0px;top:126.4px;width:42.5px;height:15.8px;line-height:16.2px;text-align:right;padding-right:3px;">28.30</div>
<div class="cell " style="left:42.5px;top:126.4px;width:43.5px;height:15.8px;line-height:16.2px;text-align:right;padding-right:3px;">-16.23</div>
<div class="cell " style="left:86px;top:126.4px;width:43.5px;height:15.8px;line-height:16.2px;text-align:right;padding-right:3px;">-1.03</div>
<div class="r" style="left:0;top:142.2px;width:260px;height:16.5px;background:#fffbf0;"></div>
<div class="cell red" style="left:0px;top:142.2px;width:42.5px;height:15.8px;line-height:16.2px;text-align:right;padding-right:3px;">26.05</div>
<div class="cell " style="left:42.5px;top:142.2px;width:43.5px;height:15.8px;line-height:16.2px;text-align:right;padding-right:3px;">-14.89</div>
<div class="cell " style="left:86px;top:142.2px;width:43.5px;height:15.8px;line-height:16.2px;text-align:right;padding-right:3px;">-1.01</div>
<div class="r" style="left:0;top:158.0px;width:260px;height:16.5px;background:#c8e6ea;"></div>
<div class="cell red" style="left:0px;top:158.0px;width:42.5px;height:15.8px;line-height:16.2px;text-align:right;padding-right:3px;">24.00</div>
<div class="cell " style="left:42.5px;top:158.0px;width:43.5px;height:15.8px;line-height:16.2px;text-align:right;padding-right:3px;">-13.66</div>
<div class="cell " style="left:86px;top:158.0px;width:43.5px;height:15.8px;line-height:16.2px;text-align:right;padding-right:3px;">-0.98</div>
<div class="r" style="left:0;top:173.8px;width:260px;height:16.5px;background:#c8e6ea;"></div>
<div class="cell grn" style="left:0px;top:173.8px;width:42.5px;height:15.8px;line-height:16.2px;text-align:right;padding-right:3px;">22.15</div>
<div class="cell " style="left:42.5px;top:173.8px;width:43.5px;height:15.8px;line-height:16.2px;text-align:right;padding-right:3px;">-12.56</div>
<div class="cell " style="left:86px;top:173.8px;width:43.5px;height:15.8px;line-height:16.2px;text-align:right;padding-right:3px;">-0.95</div>
<div class="r" style="left:0;top:189.6px;width:260px;height:16.5px;background:#c8e6ea;"></div>
<div class="cell red" style="left:0px;top:189.6px;width:42.5px;height:15.8px;line-height:16.2px;text-align:right;padding-right:3px;">20.45</div>
<div class="cell " style="left:42.5px;top:189.6px;width:43.5px;height:15.8px;line-height:16.2px;text-align:right;padding-right:3px;">-11.54</div>
<div class="cell " style="left:86px;top:189.6px;width:43.5px;height:15.8px;line-height:16.2px;text-align:right;padding-right:3px;">-0.92</div>
<div class="r" style="left:0;top:205.4px;width:260px;height:16.5px;background:#c8e6ea;"></div>
<div class="cell grn" style="left:0px;top:205.4px;width:42.5px;height:15.8px;line-height:16.2px;text-align:right;padding-right:3px;">18.90</div>
<div class="cell " style="left:42.5px;top:205.4px;width:43.5px;height:15.8px;line-height:16.2px;text-align:right;padding-right:3px;">-10.62</div>
<div class="cell " style="left:86px;top:205.4px;width:43.5px;height:15.8px;line-height:16.2px;text-align:right;padding-right:3px;">-0.89</div>
<div class="r" style="left:0;top:221.2px;width:260px;height:16.5px;background:#c8e6ea;"></div>
<div class="cell grn" style="left:0px;top:221.2px;width:42.5px;height:15.8px;line-height:16.2px;text-align:right;padding-right:3px;">17.50</div>
<div class="cell " style="left:42.5px;top:221.2px;width:43.5px;height:15.8px;line-height:16.2px;text-align:right;padding-right:3px;">-9.79</div>
<div class="cell " style="left:86px;top:221.2px;width:43.5px;height:15.8px;line-height:16.2px;text-align:right;padding-right:3px;">-0.86</div>
<div class="r" style="left:0;top:237.0px;width:260px;height:16.5px;background:#c8e6ea;"></div>
<div class="cell red" style="left:0px;top:237.0px;width:42.5px;height:15.8px;line-height:16.2px;text-align:right;padding-right:3px;">16.25</div>
<div class="cell " style="left:42.5px;top:237.0px;width:43.5px;height:15.8px;line-height:16.2px;text-align:right;padding-right:3px;">-9.04</div>
<div class="cell " style="left:86px;top:237.0px;width:43.5px;height:15.8px;line-height:16.2px;text-align:right;padding-right:3px;">-0.83</div>
<div class="r" style="left:0;top:15.0px;width:260px;height:1px;background:rgba(200,214,236,.7);"></div>
<div class="r" style="left:0;top:30.8px;width:260px;height:1px;background:rgba(200,214,236,.7);"></div>
<div class="r" style="left:0;top:46.6px;width:260px;height:1px;background:rgba(200,214,236,.7);"></div>
<div class="r" style="left:0;top:62.4px;width:260px;height:1px;background:rgba(200,214,236,.7);"></div>
<div class="r" style="left:0;top:78.2px;width:260px;height:1px;background:rgba(200,214,236,.7);"></div>
<div class="r" style="left:0;top:94.0px;width:260px;height:1px;background:rgba(200,214,236,.7);"></div>
<div class="r" style="left:0;top:109.8px;width:260px;height:1px;background:rgba(200,214,236,.7);"></div>
<div class="r" style="left:0;top:125.6px;width:260px;height:1px;background:rgba(185,190,215,.5);"></div>
<div class="r" style="left:0;top:141.4px;width:260px;height:1px;background:rgba(185,190,215,.5);"></div>
<div class="r" style="left:0;top:157.2px;width:260px;height:1px;background:rgba(210,210,215,.5);"></div>
<div class="r" style="left:0;top:173.0px;width:260px;height:1px;background:rgba(185,190,215,.5);"></div>
<div class="r" style="left:0;top:188.8px;width:260px;height:1px;background:rgba(185,190,215,.5);"></div>
<div class="r" style="left:0;top:204.6px;width:260px;height:1px;background:rgba(185,190,215,.5);"></div>
<div class="r" style="left:0;top:220.4px;width:260px;height:1px;background:rgba(185,190,215,.5);"></div>
<div class="r" style="left:0;top:236.2px;width:260px;height:1px;background:rgba(185,190,215,.5);"></div>
<div class="r" style="left:0;top:252.0px;width:260px;height:1px;background:rgba(185,190,215,.5);"></div>
<div class="r" style="left:42.5px;top:0;width:1px;height:245.5px;background:rgba(190,190,215,.42);"></div>
<div class="r" style="left:86px;top:0;width:1px;height:245.5px;background:rgba(190,190,215,.42);"></div>
<div class="r" style="left:129.5px;top:0;width:1px;height:245.5px;background:rgba(190,190,215,.42);"></div>
<div class="r" style="left:172.5px;top:0;width:1px;height:245.5px;background:rgba(190,190,215,.42);"></div>
<div class="r" style="left:216px;top:0;width:1px;height:245.5px;background:rgba(190,190,215,.42);"></div>
<div class="r" style="left:260px;top:0;width:1px;height:245.5px;background:rgba(190,190,215,.42);"></div>
<div class="r" style="left:261px;top:0;width:13.5px;height:245.5px;background:#d5dbe9;"></div>
</div>
<div class="r " style="left:132.5px;top:489.70000000000005px;width:42px;height:14.3px;background:#fdf0b4;"></div>
<div class="r " style="left:174px;top:490.70000000000005px;width:1px;height:11.8px;background:#222;"></div>
<svg width="1080" height="675" style="pointer-events:none"><path d="M494.0 254.0l2.5 -3l2.5 3z M494.0 308.5l2.5 3l2.5 -3z" fill="#6b7385"/></svg>
<div class="r " style="left:491.5px;top:267px;width:8.8px;height:14px;background:#96a2b8;"></div>
<svg width="1080" height="675" style="pointer-events:none"><path d="M494.0 355.5l2.5 -3l2.5 3z M494.0 583.5l2.5 3l2.5 -3z" fill="#6b7385"/></svg>
<div class="r " style="left:491.5px;top:433px;width:8.8px;height:15px;background:#96a2b8;"></div>
<div class="r " style="left:-4px;top:605.5px;width:101.5px;height:16px;background:#fff;border:1px solid #b4bccb;"></div>
<div class="t " style="left:-1px;top:613.5px;">ined</div>
<div class="r " style="left:104.8px;top:605.5px;width:68.7px;height:16px;background:#fff;border:1px solid #b4bccb;"></div>
<div class="t " style="left:109px;top:613.5px;">Auto</div>
<div class="r " style="left:380px;top:605.5px;width:124px;height:16px;background:rgba(255,255,255,.13);"></div>
<div class="r " style="left:385.8px;top:608.7px;width:8.6px;height:8.6px;background:#fff;border:1px solid #aab2c2;"></div>
<div class="t " style="left:398.2px;top:613.5px;letter-spacing:-.2px">Ignore Today's Trades</div>
<div class="r " style="left:-13px;top:625.3px;width:517.5px;height:17.700000000000045px;background:linear-gradient(#fafbfd,#f0f3f9);border:1px solid #c3cad8;"></div>
<div class="cell " style="left:-13px;top:625.3px;width:44.9px;height:17.100000000000023px;line-height:17.100000000000023px;text-align:center;">Cost</div>
<div class="cell " style="left:31.9px;top:625.3px;width:47.00000000000001px;height:17.100000000000023px;line-height:17.100000000000023px;text-align:center;">Curr C...</div>
<div class="cell " style="left:78.9px;top:625.3px;width:46.39999999999999px;height:17.100000000000023px;line-height:17.100000000000023px;text-align:center;">Commi...</div>
<div class="cell " style="left:125.3px;top:625.3px;width:47.10000000000001px;height:17.100000000000023px;line-height:17.100000000000023px;text-align:center;">PnL</div>
<div class="cell " style="left:172.4px;top:625.3px;width:46.5px;height:17.100000000000023px;line-height:17.100000000000023px;text-align:center;">PnL%</div>
<div class="cell " style="left:218.9px;top:625.3px;width:46.99999999999997px;height:17.100000000000023px;line-height:17.100000000000023px;text-align:center;">Delta</div>
<div class="cell " style="left:265.9px;top:625.3px;width:46.900000000000034px;height:17.100000000000023px;line-height:17.100000000000023px;text-align:center;">Gamma</div>
<div class="cell " style="left:312.8px;top:625.3px;width:46.099999999999966px;height:17.100000000000023px;line-height:17.100000000000023px;text-align:center;">Theta</div>
<div class="cell " style="left:358.9px;top:625.3px;width:47.0px;height:17.100000000000023px;line-height:17.100000000000023px;text-align:center;">Vega</div>
<div class="cell " style="left:405.9px;top:625.3px;width:46.900000000000034px;height:17.100000000000023px;line-height:17.100000000000023px;text-align:center;">T/D</div>
<div class="cell " style="left:452.8px;top:625.3px;width:51.69999999999999px;height:17.100000000000023px;line-height:17.100000000000023px;text-align:center;">Plot</div>
<div class="r " style="left:31.9px;top:625.3px;width:1px;height:17.700000000000045px;background:#c3cad8;"></div>
<div class="r " style="left:78.9px;top:625.3px;width:1px;height:17.700000000000045px;background:#c3cad8;"></div>
<div class="r " style="left:125.3px;top:625.3px;width:1px;height:17.700000000000045px;background:#c3cad8;"></div>
<div class="r " style="left:172.4px;top:625.3px;width:1px;height:17.700000000000045px;background:#c3cad8;"></div>
<div class="r " style="left:218.9px;top:625.3px;width:1px;height:17.700000000000045px;background:#c3cad8;"></div>
<div class="r " style="left:265.9px;top:625.3px;width:1px;height:17.700000000000045px;background:#c3cad8;"></div>
<div class="r " style="left:312.8px;top:625.3px;width:1px;height:17.700000000000045px;background:#c3cad8;"></div>
<div class="r " style="left:358.9px;top:625.3px;width:1px;height:17.700000000000045px;background:#c3cad8;"></div>
<div class="r " style="left:405.9px;top:625.3px;width:1px;height:17.700000000000045px;background:#c3cad8;"></div>
<div class="r " style="left:452.8px;top:625.3px;width:1px;height:17.700000000000045px;background:#c3cad8;"></div>
<div class="r " style="left:-13px;top:642.5px;width:517.5px;height:17px;background:#fff;border:1px solid #c3cad8;"></div>
<div class="cell " style="left:-40px;top:643.5px;width:71.9px;height:15.200000000000045px;line-height:15.200000000000045px;text-align:right;padding-right:3px;">199,1...</div>
<div class="cell " style="left:31.9px;top:643.5px;width:47.00000000000001px;height:15.200000000000045px;line-height:15.200000000000045px;text-align:left;padding-left:5.5px;">199,14...</div>
<div class="cell " style="left:78.9px;top:643.5px;width:46.39999999999999px;height:15.200000000000045px;line-height:15.200000000000045px;text-align:right;padding-right:3px;">5.60</div>
<div class="cell grn" style="left:125.3px;top:643.5px;width:47.10000000000001px;height:15.200000000000045px;line-height:15.200000000000045px;text-align:right;padding-right:3px;">8.41</div>
<div class="cell grn" style="left:172.4px;top:643.5px;width:46.5px;height:15.200000000000045px;line-height:15.200000000000045px;text-align:right;padding-right:3px;">0.01%</div>
<div class="cell " style="left:218.9px;top:643.5px;width:46.99999999999997px;height:15.200000000000045px;line-height:15.200000000000045px;text-align:right;padding-right:3px;">1.78</div>
<div class="cell " style="left:265.9px;top:643.5px;width:46.900000000000034px;height:15.200000000000045px;line-height:15.200000000000045px;text-align:right;padding-right:3px;">0.10</div>
<div class="cell " style="left:312.8px;top:643.5px;width:46.099999999999966px;height:15.200000000000045px;line-height:15.200000000000045px;text-align:right;padding-right:3px;">26.36</div>
<div class="cell " style="left:358.9px;top:643.5px;width:47.0px;height:15.200000000000045px;line-height:15.200000000000045px;text-align:right;padding-right:3px;">250.14</div>
<div class="cell " style="left:405.9px;top:643.5px;width:46.900000000000034px;height:15.200000000000045px;line-height:15.200000000000045px;text-align:right;padding-right:3px;">14.8</div>
<div class="r " style="left:31.9px;top:642.5px;width:1px;height:17px;background:#d3d9e5;"></div>
<div class="r " style="left:78.9px;top:642.5px;width:1px;height:17px;background:#d3d9e5;"></div>
<div class="r " style="left:125.3px;top:642.5px;width:1px;height:17px;background:#d3d9e5;"></div>
<div class="r " style="left:172.4px;top:642.5px;width:1px;height:17px;background:#d3d9e5;"></div>
<div class="r " style="left:218.9px;top:642.5px;width:1px;height:17px;background:#d3d9e5;"></div>
<div class="r " style="left:265.9px;top:642.5px;width:1px;height:17px;background:#d3d9e5;"></div>
<div class="r " style="left:312.8px;top:642.5px;width:1px;height:17px;background:#d3d9e5;"></div>
<div class="r " style="left:358.9px;top:642.5px;width:1px;height:17px;background:#d3d9e5;"></div>
<div class="r " style="left:405.9px;top:642.5px;width:1px;height:17px;background:#d3d9e5;"></div>
<div class="r " style="left:452.8px;top:642.5px;width:1px;height:17px;background:#d3d9e5;"></div>
<div class="r " style="left:474.4px;top:646.4px;width:8.8px;height:8.8px;background:#fff;border:1px solid #a4aec2;"></div>
<svg width="1080" height="675"><path d="M476.3 650.8l1.8 2l2.8 -4" fill="none" stroke="#56668a" stroke-width="1.1"/></svg>
<div class="r " style="left:-13px;top:658.7px;width:517.5px;height:17px;background:#fff;border:1px solid #c3cad8;"></div>
<div class="cell " style="left:-40px;top:659.7px;width:71.9px;height:15.200000000000045px;line-height:15.200000000000045px;text-align:right;padding-right:3px;">198,5...</div>
<div class="cell " style="left:31.9px;top:659.7px;width:47.00000000000001px;height:15.200000000000045px;line-height:15.200000000000045px;text-align:left;padding-left:5.5px;">198,54...</div>
<div class="cell " style="left:78.9px;top:659.7px;width:46.39999999999999px;height:15.200000000000045px;line-height:15.200000000000045px;text-align:right;padding-right:3px;">7.00</div>
<div class="cell grn" style="left:125.3px;top:659.7px;width:47.10000000000001px;height:15.200000000000045px;line-height:15.200000000000045px;text-align:right;padding-right:3px;">7.00</div>
<div class="cell grn" style="left:172.4px;top:659.7px;width:46.5px;height:15.200000000000045px;line-height:15.200000000000045px;text-align:right;padding-right:3px;">0.01%</div>
<div class="cell " style="left:218.9px;top:659.7px;width:46.99999999999997px;height:15.200000000000045px;line-height:15.200000000000045px;text-align:right;padding-right:3px;">5.46</div>
<div class="cell " style="left:265.9px;top:659.7px;width:46.900000000000034px;height:15.200000000000045px;line-height:15.200000000000045px;text-align:right;padding-right:3px;">0.08</div>
<div class="cell " style="left:312.8px;top:659.7px;width:46.099999999999966px;height:15.200000000000045px;line-height:15.200000000000045px;text-align:right;padding-right:3px;">35.23</div>
<div class="cell " style="left:358.9px;top:659.7px;width:47.0px;height:15.200000000000045px;line-height:15.200000000000045px;text-align:right;padding-right:3px;">172.67</div>
<div class="cell " style="left:405.9px;top:659.7px;width:46.900000000000034px;height:15.200000000000045px;line-height:15.200000000000045px;text-align:right;padding-right:3px;">6.5</div>
<div class="r " style="left:31.9px;top:658.7px;width:1px;height:17px;background:#d3d9e5;"></div>
<div class="r " style="left:78.9px;top:658.7px;width:1px;height:17px;background:#d3d9e5;"></div>
<div class="r " style="left:125.3px;top:658.7px;width:1px;height:17px;background:#d3d9e5;"></div>
<div class="r " style="left:172.4px;top:658.7px;width:1px;height:17px;background:#d3d9e5;"></div>
<div class="r " style="left:218.9px;top:658.7px;width:1px;height:17px;background:#d3d9e5;"></div>
<div class="r " style="left:265.9px;top:658.7px;width:1px;height:17px;background:#d3d9e5;"></div>
<div class="r " style="left:312.8px;top:658.7px;width:1px;height:17px;background:#d3d9e5;"></div>
<div class="r " style="left:358.9px;top:658.7px;width:1px;height:17px;background:#d3d9e5;"></div>
<div class="r " style="left:405.9px;top:658.7px;width:1px;height:17px;background:#d3d9e5;"></div>
<div class="r " style="left:452.8px;top:658.7px;width:1px;height:17px;background:#d3d9e5;"></div>
<div class="r " style="left:474.4px;top:662.6px;width:8.8px;height:8.8px;background:#fff;border:1px solid #a4aec2;"></div>
<svg width="1080" height="675"><path d="M476.3 667.0l1.8 2l2.8 -4" fill="none" stroke="#56668a" stroke-width="1.1"/></svg>
<div class="r " style="left:514.8px;top:139px;width:64.20000000000005px;height:23px;background:#d5dbe9;border:1px solid #b3bbcb;border-bottom:none;"></div>
<div class="t " style="left:546.9px;top:149.4px;transform:translateX(-50%);">Risk Chart</div>
<div class="r " style="left:579px;top:139px;width:69px;height:22px;background:#cbd2e2;border:1px solid #b3bbcb;"></div>
<div class="t " style="left:613.0px;top:149.4px;transform:translateX(-50%);">Price Chart</div>
<div class="r " style="left:647px;top:139px;width:106.5px;height:22px;background:#cbd2e2;border:1px solid #b3bbcb;"></div>
<div class="t " style="left:699.75px;top:149.4px;transform:translateX(-50%);">Movement Analysis</div>
<div class="r " style="left:752.5px;top:139px;width:56.0px;height:22px;background:#cbd2e2;border:1px solid #b3bbcb;"></div>
<div class="t " style="left:780.0px;top:149.4px;transform:translateX(-50%);">Volatility</div>
<div class="r " style="left:807.5px;top:139px;width:133.10000000000002px;height:22px;background:#cbd2e2;border:1px solid #b3bbcb;"></div>
<div class="t " style="left:873.55px;top:149.4px;transform:translateX(-50%);">Statistics &amp; Fundamentals</div>
<div class="r " style="left:514.8px;top:161px;width:1px;height:520px;background:#b3bbcb;"></div>
<div class="r " style="left:940px;top:160.3px;width:140px;height:1px;background:#c3cad9;"></div>
<div class="t " style="left:520.5px;top:172px;">Vol Adjust</div>
<div class="r " style="left:569px;top:163.2px;width:45.8px;height:16.6px;background:#fff;border:1px solid #b4bccb;"></div>
<div class="t " style="left:583px;top:171.6px;width:15px;text-align:right;">0</div>
<svg width="1080" height="675"><path d="M605 170l2.2 -2.6l2.2 2.6z M605 174.5l2.2 2.6l2.2 -2.6z" fill="#555"/></svg>
<div class="t " style="left:985px;top:172px;">Projection</div>
<div class="r " style="left:1032.5px;top:163.2px;width:60px;height:16.6px;background:#fff;border:1px solid #b4bccb;"></div>
<div class="t " style="left:1035px;top:172px;">28/08/2025</div>
<div class="r " style="left:515.8px;top:183px;width:570px;height:470px;background:#fff;"></div>
<svg width="1080" height="675" viewBox="0 0 1080 675">
<line x1="563.5" x2="1080" y1="473.7" y2="473.7" stroke="#e3e3e3" stroke-width="1"/>
<line x1="563.5" x2="1080" y1="446.2" y2="446.2" stroke="#e3e3e3" stroke-width="1"/>
<line x1="563.5" x2="1080" y1="418.6" y2="418.6" stroke="#e3e3e3" stroke-width="1"/>
<line x1="563.5" x2="1080" y1="391.1" y2="391.1" stroke="#e3e3e3" stroke-width="1"/>
<line x1="563.5" x2="1080" y1="363.5" y2="363.5" stroke="#e3e3e3" stroke-width="1"/>
<line x1="563.5" x2="1080" y1="336.0" y2="336.0" stroke="#e3e3e3" stroke-width="1"/>
<line x1="563.5" x2="1080" y1="308.4" y2="308.4" stroke="#e3e3e3" stroke-width="1"/>
<line x1="563.5" x2="1080" y1="280.9" y2="280.9" stroke="#e3e3e3" stroke-width="1"/>
<line x1="563.5" x2="1080" y1="253.3" y2="253.3" stroke="#e3e3e3" stroke-width="1"/>
<line x1="563.5" x2="1080" y1="225.8" y2="225.8" stroke="#e3e3e3" stroke-width="1"/>
<line x1="563.5" x2="1080" y1="198.2" y2="198.2" stroke="#e3e3e3" stroke-width="1"/>
<line x1="576.4" x2="576.4" y1="198.2" y2="473.7" stroke="#e3e3e3" stroke-width="1"/>
<line x1="615.3" x2="615.3" y1="198.2" y2="473.7" stroke="#e3e3e3" stroke-width="1"/>
<line x1="654.2" x2="654.2" y1="198.2" y2="473.7" stroke="#e3e3e3" stroke-width="1"/>
<line x1="693.1" x2="693.1" y1="198.2" y2="473.7" stroke="#e3e3e3" stroke-width="1"/>
<line x1="732.0" x2="732.0" y1="198.2" y2="473.7" stroke="#e3e3e3" stroke-width="1"/>
<line x1="770.9" x2="770.9" y1="198.2" y2="473.7" stroke="#e3e3e3" stroke-width="1"/>
<line x1="809.8" x2="809.8" y1="198.2" y2="473.7" stroke="#e3e3e3" stroke-width="1"/>
<line x1="848.7" x2="848.7" y1="198.2" y2="473.7" stroke="#e3e3e3" stroke-width="1"/>
<line x1="887.6" x2="887.6" y1="198.2" y2="473.7" stroke="#e3e3e3" stroke-width="1"/>
<line x1="926.5" x2="926.5" y1="198.2" y2="473.7" stroke="#e3e3e3" stroke-width="1"/>
<line x1="965.4" x2="965.4" y1="198.2" y2="473.7" stroke="#e3e3e3" stroke-width="1"/>
<line x1="1004.3" x2="1004.3" y1="198.2" y2="473.7" stroke="#e3e3e3" stroke-width="1"/>
<line x1="1043.2" x2="1043.2" y1="198.2" y2="473.7" stroke="#e3e3e3" stroke-width="1"/>
<line x1="1082.1" x2="1082.1" y1="198.2" y2="473.7" stroke="#e3e3e3" stroke-width="1"/>
<line x1="563.5" x2="563.5" y1="198.2" y2="473.7" stroke="#d0d0d0"/>
<rect x="770.4" y="198.2" width="127.7" height="275.5" fill="#92cbda"/>
<rect x="802.3" y="198.2" width="63.8" height="275.5" fill="#4c7fbc"/>
<line x1="770.4" x2="898.1" y1="473.7" y2="473.7" stroke="#ffffff" stroke-opacity=".45" stroke-width="1"/>
<line x1="770.4" x2="898.1" y1="446.2" y2="446.2" stroke="#ffffff" stroke-opacity=".45" stroke-width="1"/>
<line x1="770.4" x2="898.1" y1="418.6" y2="418.6" stroke="#ffffff" stroke-opacity=".45" stroke-width="1"/>
<line x1="770.4" x2="898.1" y1="391.1" y2="391.1" stroke="#ffffff" stroke-opacity=".45" stroke-width="1"/>
<line x1="770.4" x2="898.1" y1="363.5" y2="363.5" stroke="#ffffff" stroke-opacity=".45" stroke-width="1"/>
<line x1="770.4" x2="898.1" y1="336.0" y2="336.0" stroke="#ffffff" stroke-opacity=".45" stroke-width="1"/>
<line x1="770.4" x2="898.1" y1="308.4" y2="308.4" stroke="#ffffff" stroke-opacity=".45" stroke-width="1"/>
<line x1="770.4" x2="898.1" y1="280.9" y2="280.9" stroke="#ffffff" stroke-opacity=".45" stroke-width="1"/>
<line x1="770.4" x2="898.1" y1="253.3" y2="253.3" stroke="#ffffff" stroke-opacity=".45" stroke-width="1"/>
<line x1="770.4" x2="898.1" y1="225.8" y2="225.8" stroke="#ffffff" stroke-opacity=".45" stroke-width="1"/>
<line x1="770.4" x2="898.1" y1="198.2" y2="198.2" stroke="#ffffff" stroke-opacity=".45" stroke-width="1"/>
<line x1="809.8" x2="809.8" y1="198.2" y2="473.7" stroke="#ffffff" stroke-opacity=".45" stroke-width="1"/>
<line x1="848.7" x2="848.7" y1="198.2" y2="473.7" stroke="#ffffff" stroke-opacity=".45" stroke-width="1"/>
<line x1="887.6" x2="887.6" y1="198.2" y2="473.7" stroke="#ffffff" stroke-opacity=".45" stroke-width="1"/>
<line x1="739.9" x2="739.9" y1="198.2" y2="473.7" stroke="#b050b8" stroke-width="1" stroke-dasharray="2.5 3"/>
<line x1="939.5" x2="939.5" y1="198.2" y2="473.7" stroke="#b050b8" stroke-width="1" stroke-dasharray="2.5 3"/>
<text x="557.5" y="201.9" font-size="8.6" text-anchor="end" fill="#222">39%</text>
<text x="557.5" y="229.5" font-size="8.6" text-anchor="end" fill="#222">34%</text>
<text x="557.5" y="257.0" font-size="8.6" text-anchor="end" fill="#222">29%</text>
<text x="557.5" y="284.6" font-size="8.6" text-anchor="end" fill="#222">24%</text>
<text x="557.5" y="312.1" font-size="8.6" text-anchor="end" fill="#222">20%</text>
<text x="557.5" y="339.7" font-size="8.6" text-anchor="end" fill="#222">15%</text>
<text x="557.5" y="367.2" font-size="8.6" text-anchor="end" fill="#222">10%</text>
<text x="557.5" y="394.8" font-size="8.6" text-anchor="end" fill="#222">5%</text>
<text x="557.5" y="449.9" font-size="8.6" text-anchor="end" fill="#222">-5%</text>
<text x="557.5" y="477.4" font-size="8.6" text-anchor="end" fill="#222">-10%</text>
<rect x="521" y="412.3" width="39" height="11.2" fill="#0a8a0a"/>
<text x="557.5" y="421.3" font-size="8.6" text-anchor="end" fill="#fff">0%</text>
<line x1="560.3" x2="563.5" y1="473.7" y2="473.7" stroke="#d4d4d4" stroke-width="1"/>
<line x1="560.3" x2="563.5" y1="446.2" y2="446.2" stroke="#d4d4d4" stroke-width="1"/>
<line x1="560.3" x2="563.5" y1="418.6" y2="418.6" stroke="#d4d4d4" stroke-width="1"/>
<line x1="560.3" x2="563.5" y1="391.1" y2="391.1" stroke="#d4d4d4" stroke-width="1"/>
<line x1="560.3" x2="563.5" y1="363.5" y2="363.5" stroke="#d4d4d4" stroke-width="1"/>
<line x1="560.3" x2="563.5" y1="336.0" y2="336.0" stroke="#d4d4d4" stroke-width="1"/>
<line x1="560.3" x2="563.5" y1="308.4" y2="308.4" stroke="#d4d4d4" stroke-width="1"/>
<line x1="560.3" x2="563.5" y1="280.9" y2="280.9" stroke="#d4d4d4" stroke-width="1"/>
<line x1="560.3" x2="563.5" y1="253.3" y2="253.3" stroke="#d4d4d4" stroke-width="1"/>
<line x1="560.3" x2="563.5" y1="225.8" y2="225.8" stroke="#d4d4d4" stroke-width="1"/>
<line x1="560.3" x2="563.5" y1="198.2" y2="198.2" stroke="#d4d4d4" stroke-width="1"/>
<line x1="576.4" x2="576.4" y1="195.2" y2="198.2" stroke="#d8d8d8" stroke-width="1"/>
<line x1="576.4" x2="576.4" y1="473.7" y2="476.7" stroke="#d8d8d8" stroke-width="1"/>
<line x1="615.3" x2="615.3" y1="195.2" y2="198.2" stroke="#d8d8d8" stroke-width="1"/>
<line x1="615.3" x2="615.3" y1="473.7" y2="476.7" stroke="#d8d8d8" stroke-width="1"/>
<line x1="654.2" x2="654.2" y1="195.2" y2="198.2" stroke="#d8d8d8" stroke-width="1"/>
<line x1="654.2" x2="654.2" y1="473.7" y2="476.7" stroke="#d8d8d8" stroke-width="1"/>
<line x1="693.1" x2="693.1" y1="195.2" y2="198.2" stroke="#d8d8d8" stroke-width="1"/>
<line x1="693.1" x2="693.1" y1="473.7" y2="476.7" stroke="#d8d8d8" stroke-width="1"/>
<line x1="732.0" x2="732.0" y1="195.2" y2="198.2" stroke="#d8d8d8" stroke-width="1"/>
<line x1="732.0" x2="732.0" y1="473.7" y2="476.7" stroke="#d8d8d8" stroke-width="1"/>
<line x1="770.9" x2="770.9" y1="195.2" y2="198.2" stroke="#d8d8d8" stroke-width="1"/>
<line x1="770.9" x2="770.9" y1="473.7" y2="476.7" stroke="#d8d8d8" stroke-width="1"/>
<line x1="809.8" x2="809.8" y1="195.2" y2="198.2" stroke="#d8d8d8" stroke-width="1"/>
<line x1="809.8" x2="809.8" y1="473.7" y2="476.7" stroke="#d8d8d8" stroke-width="1"/>
<line x1="848.7" x2="848.7" y1="195.2" y2="198.2" stroke="#d8d8d8" stroke-width="1"/>
<line x1="848.7" x2="848.7" y1="473.7" y2="476.7" stroke="#d8d8d8" stroke-width="1"/>
<line x1="887.6" x2="887.6" y1="195.2" y2="198.2" stroke="#d8d8d8" stroke-width="1"/>
<line x1="887.6" x2="887.6" y1="473.7" y2="476.7" stroke="#d8d8d8" stroke-width="1"/>
<line x1="926.5" x2="926.5" y1="195.2" y2="198.2" stroke="#d8d8d8" stroke-width="1"/>
<line x1="926.5" x2="926.5" y1="473.7" y2="476.7" stroke="#d8d8d8" stroke-width="1"/>
<line x1="965.4" x2="965.4" y1="195.2" y2="198.2" stroke="#d8d8d8" stroke-width="1"/>
<line x1="965.4" x2="965.4" y1="473.7" y2="476.7" stroke="#d8d8d8" stroke-width="1"/>
<line x1="1004.3" x2="1004.3" y1="195.2" y2="198.2" stroke="#d8d8d8" stroke-width="1"/>
<line x1="1004.3" x2="1004.3" y1="473.7" y2="476.7" stroke="#d8d8d8" stroke-width="1"/>
<line x1="1043.2" x2="1043.2" y1="195.2" y2="198.2" stroke="#d8d8d8" stroke-width="1"/>
<line x1="1043.2" x2="1043.2" y1="473.7" y2="476.7" stroke="#d8d8d8" stroke-width="1"/>
<line x1="1082.1" x2="1082.1" y1="195.2" y2="198.2" stroke="#d8d8d8" stroke-width="1"/>
<line x1="1082.1" x2="1082.1" y1="473.7" y2="476.7" stroke="#d8d8d8" stroke-width="1"/>
<text x="576.4" y="486.5" font-size="8.6" text-anchor="middle" fill="#222">6150</text>
<text x="615.3" y="486.5" font-size="8.6" text-anchor="middle" fill="#222">6200</text>
<text x="654.2" y="486.5" font-size="8.6" text-anchor="middle" fill="#222">6250</text>
<text x="693.1" y="486.5" font-size="8.6" text-anchor="middle" fill="#222">6300</text>
<text x="732.0" y="486.5" font-size="8.6" text-anchor="middle" fill="#222">6350</text>
<text x="770.9" y="486.5" font-size="8.6" text-anchor="middle" fill="#222">6400</text>
<text x="809.8" y="486.5" font-size="8.6" text-anchor="middle" fill="#222">6450</text>
<text x="848.7" y="486.5" font-size="8.6" text-anchor="middle" fill="#222">6500</text>
<text x="887.6" y="486.5" font-size="8.6" text-anchor="middle" fill="#222">6550</text>
<text x="926.5" y="486.5" font-size="8.6" text-anchor="middle" fill="#222">6600</text>
<text x="965.4" y="486.5" font-size="8.6" text-anchor="middle" fill="#222">6650</text>
<text x="1004.3" y="486.5" font-size="8.6" text-anchor="middle" fill="#222">6700</text>
<text x="1043.2" y="486.5" font-size="8.6" text-anchor="middle" fill="#222">6750</text>
<text x="1082.1" y="486.5" font-size="8.6" text-anchor="middle" fill="#222">6800</text>
<text x="576.4" y="193.5" font-size="8.6" text-anchor="middle" fill="#222">-5.1%</text>
<text x="615.3" y="193.5" font-size="8.6" text-anchor="middle" fill="#222">-4.3%</text>
<text x="654.2" y="193.5" font-size="8.6" text-anchor="middle" fill="#222">-3.6%</text>
<text x="693.1" y="193.5" font-size="8.6" text-anchor="middle" fill="#222">-2.8%</text>
<text x="732.0" y="193.5" font-size="8.6" text-anchor="middle" fill="#222">-2.0%</text>
<text x="770.9" y="193.5" font-size="8.6" text-anchor="middle" fill="#222">-1.3%</text>
<text x="809.8" y="193.5" font-size="8.6" text-anchor="middle" fill="#222">-0.5%</text>
<text x="848.7" y="193.5" font-size="8.6" text-anchor="middle" fill="#222">0.3%</text>
<text x="887.6" y="193.5" font-size="8.6" text-anchor="middle" fill="#222">1.1%</text>
<text x="926.5" y="193.5" font-size="8.6" text-anchor="middle" fill="#222">1.8%</text>
<text x="965.4" y="193.5" font-size="8.6" text-anchor="middle" fill="#222">2.6%</text>
<text x="1004.3" y="193.5" font-size="8.6" text-anchor="middle" fill="#222">3.4%</text>
<text x="1043.2" y="193.5" font-size="8.6" text-anchor="middle" fill="#222">4.1%</text>
<text x="1082.1" y="193.5" font-size="8.6" text-anchor="middle" fill="#222">4.9%</text>
<rect x="816.3" y="183.2" width="27.6" height="10.5" fill="#eef2f8" stroke="#7a8496" stroke-width="0.8"/>
<text x="830.2" y="192.6" font-size="8.8" text-anchor="middle" fill="#333">-0.1%</text>
<clipPath id="cp"><rect x="563.5" y="196.2" width="520" height="279.5"/></clipPath><g clip-path="url(#cp)">
<path d="M563.5 419.6 C572.9 419.5 598.9 419.2 620.0 419.0 C641.1 418.8 665.0 418.6 690.0 418.6 C715.0 418.6 746.7 419.1 770.0 419.2 C793.3 419.3 813.3 419.2 830.0 419.0 C846.7 418.8 858.6 418.3 870.0 417.8 C881.4 417.3 886.8 417.4 898.4 416.2 C910.0 415.0 921.9 413.1 939.5 410.4 C957.1 407.7 980.6 403.8 1004.0 399.8 C1027.4 395.8 1067.3 388.6 1080.0 386.4" fill="none" stroke="#7fdc7f" stroke-width="1.1" stroke-opacity="1"/>
<path d="M563.5 407.1 C572.0 407.3 599.6 407.9 614.7 408.5 C629.8 409.1 641.0 409.8 653.9 410.5 C666.8 411.2 679.2 412.1 692.2 413.0 C705.2 413.9 718.6 414.9 731.6 415.7 C744.6 416.5 754.0 417.1 770.4 417.6 C786.8 418.1 811.7 418.9 830.0 418.9 C848.3 418.9 861.8 418.7 880.0 417.6 C898.2 416.5 918.8 415.0 939.5 412.4 C960.2 409.8 980.6 406.0 1004.0 402.0 C1027.4 398.0 1067.3 390.5 1080.0 388.2" fill="none" stroke="#8fa8f0" stroke-width="1.0" stroke-opacity="1"/>
<path d="M563.5 373.3 C567.9 373.5 581.5 373.8 590.0 374.5 C598.5 375.2 604.1 375.8 614.7 377.6 C625.4 379.4 641.0 382.6 653.9 385.4 C666.8 388.2 679.2 391.4 692.2 394.5 C705.2 397.6 718.6 401.4 731.6 404.3 C744.6 407.2 759.0 409.9 770.4 411.9 C781.8 413.9 790.2 415.0 800.0 416.2 C809.8 417.4 819.4 418.7 829.4 419.2 C839.4 419.7 848.5 419.5 860.0 419.3 C871.5 419.1 885.1 419.0 898.4 418.2 C911.6 417.4 921.9 416.9 939.5 414.4 C957.1 411.9 980.6 407.3 1004.0 403.0 C1027.4 398.7 1067.3 391.0 1080.0 388.6" fill="none" stroke="#f06868" stroke-width="0.85" stroke-opacity="1"/>
<path d="M563.5 388.3 C568.2 388.1 583.1 386.8 591.6 386.9 C600.1 386.9 604.3 387.5 614.7 388.6 C625.1 389.7 641.0 391.5 653.9 393.3 C666.8 395.1 679.2 397.4 692.2 399.5 C705.2 401.6 718.6 403.8 731.6 405.9 C744.6 408.0 759.0 410.5 770.4 412.3 C781.8 414.1 790.2 415.4 800.0 416.5 C809.8 417.6 819.4 418.6 829.4 419.0 C839.4 419.4 848.5 419.3 860.0 419.2 C871.5 419.1 885.1 419.2 898.4 418.6 C911.6 418.0 921.9 418.2 939.5 415.8 C957.1 413.4 980.6 408.8 1004.0 404.4 C1027.4 400.0 1067.3 391.9 1080.0 389.4" fill="none" stroke="#f06868" stroke-width="0.85" stroke-opacity="1"/>
<line x1="563.5" x2="1080" y1="418.6" y2="418.6" stroke="#555050" stroke-width="1.2" stroke-opacity=".85"/>
<path d="M563.5 208.3 L770.9 457.8 L1080.0 391.5" fill="none" stroke="#4848d8" stroke-width="1.3" stroke-opacity="1" stroke-linejoin="round"/>
<path d="M563.5 241.3 L615.3 264.6 L770.9 454.4 L1080.0 388.1" fill="none" stroke="#0c7a0c" stroke-width="1.7" stroke-opacity="1" stroke-linejoin="round"/>
<line x1="563.5" x2="775" y1="418.8" y2="418.8" stroke="#2a9a2a" stroke-width="1.5" stroke-opacity=".5" stroke-dasharray="14 9 30 6 22 12"/>
</g>
<rect x="823.5" y="415.3" width="21" height="6.6" fill="#b89a88" fill-opacity=".75"/>
<circle cx="830.5" cy="418.6" r="2.8" fill="#36b8c0" stroke="#1e3a50" stroke-width="1"/>
<text transform="translate(779.9 232.5) rotate(-90)" font-size="8.6" fill="#5f97c9">6399.34</text>
<text transform="translate(810.3 232.5) rotate(-90)" font-size="8.6" fill="#86b0de">6440.37</text>
<text transform="translate(864.7 232.5) rotate(-90)" font-size="8.6" fill="#86b0de">6522.43</text>
<text transform="translate(896.6 232.5) rotate(-90)" font-size="8.6" fill="#5f97c9">6563.46</text>
<text transform="translate(738.3 470.5) rotate(-90)" font-size="8.6" fill="#a040a8">6360.21</text>
<text transform="translate(937.9 470.5) rotate(-90)" font-size="8.6" fill="#a040a8">6616.70</text>
<text x="639" y="466" font-size="8.6" fill="#a040a8">23.2%</text>
<text x="826.6" y="466" font-size="8.6" fill="#a828b8">49.3%</text>
<text x="1030" y="466" font-size="8.6" fill="#a040a8">27.5%</text>
<rect x="567.7" y="203.3" width="137.3" height="92.8" rx="3" fill="#e6ecf5" fill-opacity=".8" stroke="#9aa6b8" stroke-width="1"/>
<rect x="574" y="210.2" width="2.4" height="9.6" fill="#e03c3c"/>
<text x="577" y="218.2" font-size="8.8" fill="#555">-5.60 Realized PnL</text>
<rect x="574" y="221.9" width="2.4" height="9.6" fill="#58a858"/>
<text x="577" y="229.9" font-size="8.8" fill="#555" xml:space="preserve">+1 <tspan fill="#4c4ce0">30sep. 6125 Put Δ</tspan></text>
<text x="699.3" y="229.9" font-size="8.8" fill="#4c4ce0" text-anchor="end">-12.19</text>
<rect x="574" y="233.7" width="2.4" height="9.6" fill="#58a858"/>
<text x="577" y="241.7" font-size="8.8" fill="#555" xml:space="preserve">-1 <tspan fill="#f06060">30sep. 6200 Put Δ</tspan></text>
<text x="696.5" y="241.7" font-size="8.8" fill="#f06060" text-anchor="end">-15.87</text>
<rect x="574" y="245.4" width="2.4" height="9.6" fill="#7a9ee6"/>
<text x="577" y="253.4" font-size="8.8" fill="#555" xml:space="preserve">+2 <tspan fill="#4c4ce0">30sep. 6400 Put Δ</tspan></text>
<text x="699.3" y="253.4" font-size="8.8" fill="#4c4ce0" text-anchor="end">-33.37</text>
<rect x="574" y="257.2" width="2.4" height="9.6" fill="#7a9ee6"/>
<text x="577" y="265.2" font-size="8.8" fill="#555" xml:space="preserve">+2 <tspan fill="#4c4ce0">30sep. 5850 Put Δ</tspan></text>
<text x="699.3" y="265.2" font-size="8.8" fill="#4c4ce0" text-anchor="end">-5.17</text>
<rect x="574" y="268.9" width="2.4" height="9.6" fill="#7a9ee6"/>
<text x="577" y="276.9" font-size="8.8" fill="#555" xml:space="preserve">-4 <tspan fill="#f06060">30sep. 6125 Put Δ</tspan></text>
<text x="696.5" y="276.9" font-size="8.8" fill="#f06060" text-anchor="end">-12.19</text>
<rect x="574" y="280.7" width="2.4" height="9.6" fill="#7a9ee6"/>
<text x="577" y="288.7" font-size="8.8" fill="#555" xml:space="preserve">+30 <tspan fill="#4c4ce0">SPX Stock</tspan></text>
<rect x="567.7" y="423.2" width="96.6" height="46.4" rx="3" fill="#e6ecf5" fill-opacity=".8" stroke="#9aa6b8" stroke-width="1"/>
<text x="574.2" y="437.9" font-size="8.8" fill="#58aa58">30/09/2025 (0)</text>
<text x="574.2" y="449.8" font-size="8.8" fill="#f07474">13/09/2025 (17) T+16</text>
<text x="574.2" y="461.6" font-size="8.8" fill="#86dc86">28/08/2025 (33) T+0</text>
<text x="639" y="466" font-size="8.6" fill="#a040a8">23.2%</text>
<rect x="519.5" y="492.5" width="575" height="157.5" rx="3.5" fill="#e9f0f9" stroke="#8792a6" stroke-width="1"/>
<clipPath id="cp2"><rect x="561" y="493" width="523" height="157"/></clipPath><g clip-path="url(#cp2)">
<rect x="868.1" y="514.7" width="38.9" height="0.8" fill="#4a68ea" stroke="#35449a" stroke-width=".6"/>
<rect x="907.0" y="513.8" width="38.9" height="1.7" fill="#4a68ea" stroke="#35449a" stroke-width=".6"/>
<rect x="946.0" y="512.6" width="38.9" height="2.9" fill="#4a68ea" stroke="#35449a" stroke-width=".6"/>
<rect x="984.8" y="511.3" width="38.9" height="4.2" fill="#4a68ea" stroke="#35449a" stroke-width=".6"/>
<rect x="1023.8" y="509.7" width="38.9" height="5.8" fill="#4a68ea" stroke="#35449a" stroke-width=".6"/>
<rect x="1062.7" y="508.1" width="38.9" height="7.4" fill="#4a68ea" stroke="#35449a" stroke-width=".6"/>
<line x1="564" x2="1080" y1="515.5" y2="515.5" stroke="#555" stroke-width="1"/>
<text x="576.4" y="504.8" font-size="8.6" text-anchor="middle" fill="#f06c6c">0%</text>
<text x="576.4" y="514.8" font-size="8.6" text-anchor="middle" fill="#f06c6c">-115</text>
<text x="615.3" y="524.4" font-size="8.6" text-anchor="middle" fill="#6c6cf2">135</text>
<text x="615.3" y="532.8" font-size="8.6" text-anchor="middle" fill="#6c6cf2">0%</text>
<text x="654.2" y="524.4" font-size="8.6" text-anchor="middle" fill="#6c6cf2">144</text>
<text x="654.2" y="532.8" font-size="8.6" text-anchor="middle" fill="#6c6cf2">0%</text>
<text x="693.1" y="524.4" font-size="8.6" text-anchor="middle" fill="#6c6cf2">24</text>
<text x="693.1" y="532.8" font-size="8.6" text-anchor="middle" fill="#6c6cf2">0%</text>
<text x="732.0" y="504.8" font-size="8.6" text-anchor="middle" fill="#f06c6c">0%</text>
<text x="732.0" y="514.8" font-size="8.6" text-anchor="middle" fill="#f06c6c">-117</text>
<text x="770.9" y="504.8" font-size="8.6" text-anchor="middle" fill="#f06c6c">0%</text>
<text x="770.9" y="514.8" font-size="8.6" text-anchor="middle" fill="#f06c6c">-186</text>
<text x="809.8" y="504.8" font-size="8.6" text-anchor="middle" fill="#f06c6c" fill-opacity=".35">0%</text>
<text x="809.8" y="514.8" font-size="8.6" text-anchor="middle" fill="#f06c6c" fill-opacity=".35">-113</text>
<text x="848.7" y="524.4" font-size="8.6" text-anchor="middle" fill="#6c6cf2" fill-opacity=".35">158</text>
<text x="848.7" y="532.8" font-size="8.6" text-anchor="middle" fill="#6c6cf2" fill-opacity=".35">0%</text>
<text x="887.6" y="524.4" font-size="8.6" text-anchor="middle" fill="#6c6cf2">638</text>
<text x="887.6" y="532.8" font-size="8.6" text-anchor="middle" fill="#6c6cf2">1%</text>
<text x="926.5" y="524.4" font-size="8.6" text-anchor="middle" fill="#6c6cf2">1329</text>
<text x="926.5" y="532.8" font-size="8.6" text-anchor="middle" fill="#6c6cf2">1%</text>
<text x="965.4" y="524.4" font-size="8.6" text-anchor="middle" fill="#6c6cf2">2216</text>
<text x="965.4" y="532.8" font-size="8.6" text-anchor="middle" fill="#6c6cf2">2%</text>
<text x="1004.3" y="524.4" font-size="8.6" text-anchor="middle" fill="#6c6cf2">3270</text>
<text x="1004.3" y="532.8" font-size="8.6" text-anchor="middle" fill="#6c6cf2">3%</text>
<text x="1043.2" y="524.4" font-size="8.6" text-anchor="middle" fill="#6c6cf2">4459</text>
<text x="1043.2" y="532.8" font-size="8.6" text-anchor="middle" fill="#6c6cf2">4%</text>
<text x="1082.1" y="524.4" font-size="8.6" text-anchor="middle" fill="#6c6cf2">5737</text>
<text x="1082.1" y="532.8" font-size="8.6" text-anchor="middle" fill="#6c6cf2">6%</text>
<rect x="564.0" y="549.7" width="31.9" height="2.5" fill="#4a68ea" stroke="#35449a" stroke-width=".6"/>
<rect x="595.9" y="551.5" width="38.9" height="0.7" fill="#4a68ea" stroke="#35449a" stroke-width=".6"/>
<rect x="673.6" y="552.2" width="38.9" height="0.9" fill="#f07272" stroke="#9a5555" stroke-width=".6"/>
<rect x="712.5" y="552.2" width="38.9" height="0.7" fill="#f07272" stroke="#9a5555" stroke-width=".6"/>
<rect x="790.4" y="551.2" width="38.9" height="1.0" fill="#4a68ea" stroke="#35449a" stroke-width=".6"/>
<rect x="829.2" y="549.9" width="38.9" height="2.3" fill="#4a68ea" stroke="#35449a" stroke-width=".6"/>
<rect x="868.1" y="548.6" width="38.9" height="3.6" fill="#4a68ea" stroke="#35449a" stroke-width=".6"/>
<rect x="907.0" y="547.3" width="38.9" height="4.9" fill="#4a68ea" stroke="#35449a" stroke-width=".6"/>
<rect x="946.0" y="546.2" width="38.9" height="6.0" fill="#4a68ea" stroke="#35449a" stroke-width=".6"/>
<rect x="984.8" y="545.3" width="38.9" height="6.9" fill="#4a68ea" stroke="#35449a" stroke-width=".6"/>
<rect x="1023.8" y="544.5" width="38.9" height="7.7" fill="#4a68ea" stroke="#35449a" stroke-width=".6"/>
<rect x="1062.7" y="544.0" width="38.9" height="8.2" fill="#4a68ea" stroke="#35449a" stroke-width=".6"/>
<line x1="564" x2="1080" y1="552.2" y2="552.2" stroke="#555" stroke-width="1"/>
<text x="576.4" y="560.8" font-size="8.6" text-anchor="middle" fill="#6c6cf2">8.11</text>
<text x="615.3" y="560.8" font-size="8.6" text-anchor="middle" fill="#6c6cf2">2.23</text>
<text x="654.2" y="551.6" font-size="8.6" text-anchor="middle" fill="#f06c6c">-1.48</text>
<text x="693.1" y="551.6" font-size="8.6" text-anchor="middle" fill="#f06c6c">-2.95</text>
<text x="732.0" y="551.6" font-size="8.6" text-anchor="middle" fill="#f06c6c">-2.38</text>
<text x="770.9" y="551.6" font-size="8.6" text-anchor="middle" fill="#f06c6c">-0.12</text>
<text x="809.8" y="560.8" font-size="8.6" text-anchor="middle" fill="#6c6cf2" fill-opacity=".35">3.32</text>
<text x="848.7" y="560.8" font-size="8.6" text-anchor="middle" fill="#6c6cf2" fill-opacity=".35">7.44</text>
<text x="887.6" y="560.8" font-size="8.6" text-anchor="middle" fill="#6c6cf2">11.75</text>
<text x="926.5" y="560.8" font-size="8.6" text-anchor="middle" fill="#6c6cf2">15.86</text>
<text x="965.4" y="560.8" font-size="8.6" text-anchor="middle" fill="#6c6cf2">19.50</text>
<text x="1004.3" y="560.8" font-size="8.6" text-anchor="middle" fill="#6c6cf2">22.54</text>
<text x="1043.2" y="560.8" font-size="8.6" text-anchor="middle" fill="#6c6cf2">24.93</text>
<text x="1082.1" y="560.8" font-size="8.6" text-anchor="middle" fill="#6c6cf2">26.71</text>
<rect x="564.0" y="579.7" width="31.9" height="9.2" fill="#f07272" stroke="#9a5555" stroke-width=".6"/>
<rect x="595.9" y="579.7" width="38.9" height="6.6" fill="#f07272" stroke="#9a5555" stroke-width=".6"/>
<rect x="634.8" y="579.7" width="38.9" height="3.3" fill="#f07272" stroke="#9a5555" stroke-width=".6"/>
<rect x="673.6" y="579.7" width="38.9" height="0.7" fill="#f07272" stroke="#9a5555" stroke-width=".6"/>
<rect x="712.5" y="577.7" width="38.9" height="2.0" fill="#4a68ea" stroke="#35449a" stroke-width=".6"/>
<rect x="751.5" y="575.8" width="38.9" height="3.9" fill="#4a68ea" stroke="#35449a" stroke-width=".6"/>
<rect x="790.4" y="574.4" width="38.9" height="5.3" fill="#4a68ea" stroke="#35449a" stroke-width=".6"/>
<rect x="829.2" y="573.8" width="38.9" height="5.9" fill="#4a68ea" stroke="#35449a" stroke-width=".6"/>
<rect x="868.1" y="573.8" width="38.9" height="5.9" fill="#4a68ea" stroke="#35449a" stroke-width=".6"/>
<rect x="907.0" y="574.4" width="38.9" height="5.3" fill="#4a68ea" stroke="#35449a" stroke-width=".6"/>
<rect x="946.0" y="575.1" width="38.9" height="4.6" fill="#4a68ea" stroke="#35449a" stroke-width=".6"/>
<rect x="984.8" y="576.4" width="38.9" height="3.3" fill="#4a68ea" stroke="#35449a" stroke-width=".6"/>
<rect x="1023.8" y="577.1" width="38.9" height="2.6" fill="#4a68ea" stroke="#35449a" stroke-width=".6"/>
<rect x="1062.7" y="577.7" width="38.9" height="2.0" fill="#4a68ea" stroke="#35449a" stroke-width=".6"/>
<line x1="564" x2="1080" y1="579.7" y2="579.7" stroke="#555" stroke-width="1"/>
<text x="576.4" y="579.1" font-size="8.6" text-anchor="middle" fill="#f06c6c">-0.14</text>
<text x="615.3" y="579.1" font-size="8.6" text-anchor="middle" fill="#f06c6c">-0.10</text>
<text x="654.2" y="579.1" font-size="8.6" text-anchor="middle" fill="#f06c6c">-0.05</text>
<text x="693.1" y="579.1" font-size="8.6" text-anchor="middle" fill="#f06c6c">-0.01</text>
<text x="732.0" y="588.3" font-size="8.6" text-anchor="middle" fill="#6c6cf2">0.03</text>
<text x="770.9" y="588.3" font-size="8.6" text-anchor="middle" fill="#6c6cf2">0.06</text>
<text x="809.8" y="588.3" font-size="8.6" text-anchor="middle" fill="#6c6cf2" fill-opacity=".35">0.08</text>
<text x="848.7" y="588.3" font-size="8.6" text-anchor="middle" fill="#6c6cf2" fill-opacity=".35">0.09</text>
<text x="887.6" y="588.3" font-size="8.6" text-anchor="middle" fill="#6c6cf2">0.09</text>
<text x="926.5" y="588.3" font-size="8.6" text-anchor="middle" fill="#6c6cf2">0.08</text>
<text x="965.4" y="588.3" font-size="8.6" text-anchor="middle" fill="#6c6cf2">0.07</text>
<text x="1004.3" y="588.3" font-size="8.6" text-anchor="middle" fill="#6c6cf2">0.05</text>
<text x="1043.2" y="588.3" font-size="8.6" text-anchor="middle" fill="#6c6cf2">0.04</text>
<text x="1082.1" y="588.3" font-size="8.6" text-anchor="middle" fill="#6c6cf2">0.03</text>
<rect x="564.0" y="597.9" width="31.9" height="9.2" fill="#4a68ea" stroke="#35449a" stroke-width=".6"/>
<rect x="595.9" y="598.5" width="38.9" height="8.6" fill="#4a68ea" stroke="#35449a" stroke-width=".6"/>
<rect x="634.8" y="599.6" width="38.9" height="7.5" fill="#4a68ea" stroke="#35449a" stroke-width=".6"/>
<rect x="673.6" y="601.0" width="38.9" height="6.1" fill="#4a68ea" stroke="#35449a" stroke-width=".6"/>
<rect x="712.5" y="602.5" width="38.9" height="4.6" fill="#4a68ea" stroke="#35449a" stroke-width=".6"/>
<rect x="751.5" y="604.0" width="38.9" height="3.1" fill="#4a68ea" stroke="#35449a" stroke-width=".6"/>
<rect x="790.4" y="605.2" width="38.9" height="1.9" fill="#4a68ea" stroke="#35449a" stroke-width=".6"/>
<rect x="829.2" y="606.2" width="38.9" height="0.9" fill="#4a68ea" stroke="#35449a" stroke-width=".6"/>
<line x1="564" x2="1080" y1="607.1" y2="607.1" stroke="#555" stroke-width="1"/>
<text x="576.4" y="615.7" font-size="8.6" text-anchor="middle" fill="#6c6cf2">241.60</text>
<text x="615.3" y="615.7" font-size="8.6" text-anchor="middle" fill="#6c6cf2">225.90</text>
<text x="654.2" y="615.7" font-size="8.6" text-anchor="middle" fill="#6c6cf2">197.21</text>
<text x="693.1" y="615.7" font-size="8.6" text-anchor="middle" fill="#6c6cf2">160.42</text>
<text x="732.0" y="615.7" font-size="8.6" text-anchor="middle" fill="#6c6cf2">120.71</text>
<text x="770.9" y="615.7" font-size="8.6" text-anchor="middle" fill="#6c6cf2">82.70</text>
<text x="809.8" y="615.7" font-size="8.6" text-anchor="middle" fill="#6c6cf2" fill-opacity=".35">49.85</text>
<text x="848.7" y="615.7" font-size="8.6" text-anchor="middle" fill="#6c6cf2" fill-opacity=".35">24.17</text>
<text x="887.6" y="615.7" font-size="8.6" text-anchor="middle" fill="#6c6cf2">6.17</text>
<text x="926.5" y="606.5" font-size="8.6" text-anchor="middle" fill="#f06c6c">-4.75</text>
<text x="965.4" y="606.5" font-size="8.6" text-anchor="middle" fill="#f06c6c">-9.99</text>
<text x="1004.3" y="606.5" font-size="8.6" text-anchor="middle" fill="#f06c6c">-11.20</text>
<text x="1043.2" y="606.5" font-size="8.6" text-anchor="middle" fill="#f06c6c">-10.00</text>
<text x="1082.1" y="606.5" font-size="8.6" text-anchor="middle" fill="#f06c6c">-7.62</text>
<rect x="564.0" y="634.5" width="31.9" height="9.2" fill="#f07272" stroke="#9a5555" stroke-width=".6"/>
<rect x="595.9" y="634.5" width="38.9" height="7.7" fill="#f07272" stroke="#9a5555" stroke-width=".6"/>
<rect x="634.8" y="634.5" width="38.9" height="5.7" fill="#f07272" stroke="#9a5555" stroke-width=".6"/>
<rect x="673.6" y="634.5" width="38.9" height="3.7" fill="#f07272" stroke="#9a5555" stroke-width=".6"/>
<rect x="712.5" y="634.5" width="38.9" height="1.7" fill="#f07272" stroke="#9a5555" stroke-width=".6"/>
<rect x="790.4" y="633.2" width="38.9" height="1.3" fill="#4a68ea" stroke="#35449a" stroke-width=".6"/>
<rect x="829.2" y="632.4" width="38.9" height="2.1" fill="#4a68ea" stroke="#35449a" stroke-width=".6"/>
<rect x="868.1" y="632.0" width="38.9" height="2.5" fill="#4a68ea" stroke="#35449a" stroke-width=".6"/>
<rect x="907.0" y="632.0" width="38.9" height="2.5" fill="#4a68ea" stroke="#35449a" stroke-width=".6"/>
<rect x="946.0" y="632.2" width="38.9" height="2.3" fill="#4a68ea" stroke="#35449a" stroke-width=".6"/>
<rect x="984.8" y="632.6" width="38.9" height="1.9" fill="#4a68ea" stroke="#35449a" stroke-width=".6"/>
<rect x="1023.8" y="633.0" width="38.9" height="1.5" fill="#4a68ea" stroke="#35449a" stroke-width=".6"/>
<rect x="1062.7" y="633.4" width="38.9" height="1.1" fill="#4a68ea" stroke="#35449a" stroke-width=".6"/>
<line x1="564" x2="1080" y1="634.5" y2="634.5" stroke="#555" stroke-width="1"/>
<text x="576.4" y="633.9" font-size="8.6" text-anchor="middle" fill="#f06c6c">-902.23</text>
<text x="615.3" y="633.9" font-size="8.6" text-anchor="middle" fill="#f06c6c">-751.85</text>
<text x="654.2" y="633.9" font-size="8.6" text-anchor="middle" fill="#f06c6c">-563.30</text>
<text x="693.1" y="633.9" font-size="8.6" text-anchor="middle" fill="#f06c6c">-360.55</text>
<text x="732.0" y="633.9" font-size="8.6" text-anchor="middle" fill="#f06c6c">-166.89</text>
<text x="770.9" y="633.9" font-size="8.6" text-anchor="middle" fill="#f06c6c">-1.28</text>
<text x="809.8" y="643.1" font-size="8.6" text-anchor="middle" fill="#6c6cf2" fill-opacity=".35">124.16</text>
<text x="848.7" y="643.1" font-size="8.6" text-anchor="middle" fill="#6c6cf2" fill-opacity=".35">204.92</text>
<text x="887.6" y="643.1" font-size="8.6" text-anchor="middle" fill="#6c6cf2">243.40</text>
<text x="926.5" y="643.1" font-size="8.6" text-anchor="middle" fill="#6c6cf2">247.04</text>
<text x="965.4" y="643.1" font-size="8.6" text-anchor="middle" fill="#6c6cf2">225.86</text>
<text x="1004.3" y="643.1" font-size="8.6" text-anchor="middle" fill="#6c6cf2">190.26</text>
<text x="1043.2" y="643.1" font-size="8.6" text-anchor="middle" fill="#6c6cf2">149.26</text>
<text x="1082.1" y="643.1" font-size="8.6" text-anchor="middle" fill="#6c6cf2">105.12</text>
</g>
<text x="541.5" y="519.5" font-size="8.8" text-anchor="middle" fill="#555">PnL</text>
<text x="541.5" y="556.2" font-size="8.8" text-anchor="middle" fill="#555">Delta</text>
<text x="541.5" y="583.7" font-size="8.8" text-anchor="middle" fill="#555">Gamma</text>
<text x="541.5" y="611.1" font-size="8.8" text-anchor="middle" fill="#555">Theta</text>
<text x="541.5" y="638.5" font-size="8.8" text-anchor="middle" fill="#555">Vega</text>
<rect x="809" y="478.3" width="41.5" height="170.7" rx="3" fill="#ebf1fa" fill-opacity=".86" stroke="#9aa4b6" stroke-width="1"/>
<text x="830" y="486.8" font-size="9.2" text-anchor="middle" fill="#222">6476.60</text>
<text x="830" y="514.8" font-size="8.8" text-anchor="middle" fill="#3434e6" stroke="#3434e6" stroke-width=".25">7</text>
<text x="830" y="528.4" font-size="8.8" text-anchor="middle" fill="#3434e6" stroke="#3434e6" stroke-width=".25">0.0%</text>
<text x="830" y="555.6" font-size="8.8" text-anchor="middle" fill="#3434e6" stroke="#3434e6" stroke-width=".25">5.46</text>
<text x="830" y="583.2" font-size="8.8" text-anchor="middle" fill="#3434e6" stroke="#3434e6" stroke-width=".25">0.08</text>
<text x="830" y="610.6" font-size="8.8" text-anchor="middle" fill="#3434e6" stroke="#3434e6" stroke-width=".25">35.23</text>
<text x="830" y="638.2" font-size="8.8" text-anchor="middle" fill="#3434e6" stroke="#3434e6" stroke-width=".25">172.67</text>
</svg>
<div class="r " style="left:515.8px;top:653.8px;width:565px;height:22px;background:#273653;"></div>
<div class="r " style="left:986px;top:650.8px;width:100px;height:30px;background:#f0f0f0;border:1px solid #d0d0d0;"></div>
<div class="t " style="left:993.8px;top:663.5px;letter-spacing:-0.55px;font-size:11.5px;color:#2a2a2a;">MOVISTAR-WIFI6-0</div>
<div class="t " style="left:993.8px;top:677.5px;letter-spacing:-0.4px;font-size:11.5px;color:#2a2a2a;">Acceso a Internet</div>
<svg width="1080" height="675" viewBox="0 0 1080 675"><defs><linearGradient id="gR" x1="0" x2="1"><stop offset="0" stop-color="#f08a8a"/><stop offset=".45" stop-color="#e04848"/><stop offset="1" stop-color="#c03838"/></linearGradient><linearGradient id="gB" x1="0" x2="1"><stop offset="0" stop-color="#9cc4ee"/><stop offset=".45" stop-color="#5a96d8"/><stop offset="1" stop-color="#3e78bc"/></linearGradient><linearGradient id="gG" x1="0" x2="1"><stop offset="0" stop-color="#b4d88a"/><stop offset=".45" stop-color="#86b850"/><stop offset="1" stop-color="#6a9a3c"/></linearGradient><linearGradient id="gO" x1="0" x2="1"><stop offset="0" stop-color="#f8dca0"/><stop offset=".45" stop-color="#eeb060"/><stop offset="1" stop-color="#d48c40"/></linearGradient><linearGradient id="gP" x1="0" y1="0" x2="0" y2="1"><stop offset="0" stop-color="#d6d6d6"/><stop offset="1" stop-color="#aeb0b4"/></linearGradient><radialGradient id="gS" cx=".35" cy=".3" r=".8"><stop offset="0" stop-color="#bfe0ff"/><stop offset=".5" stop-color="#4a90d8"/><stop offset="1" stop-color="#205a9c"/></radialGradient><linearGradient id="gPlus" x1="0" y1="0" x2="0" y2="1"><stop offset="0" stop-color="#b8dc78"/><stop offset="1" stop-color="#5c9c2c"/></linearGradient></defs>
<rect x="-2.5" y="68.5" width="4.5" height="9.299999999999997" rx="1.6" fill="url(#gR)"/>
<rect x="3.3" y="64.5" width="4.7" height="13.299999999999997" rx="1.6" fill="url(#gB)"/>
<rect x="9.2" y="60" width="5.4" height="17.799999999999997" rx="1.6" fill="url(#gG)"/>
<rect x="15.4" y="55.3" width="5.4" height="22.5" rx="1.6" fill="url(#gO)"/>
<rect x="60.8" y="54.8" width="19.6" height="23.2" rx="1" fill="#fbfcff" stroke="#9fb0d2" stroke-width="1.2"/>
<rect x="64" y="58.5" width="13.400000000000006" height="1.5" fill="#b4c4e4"/>
<rect x="64" y="61.0" width="13.400000000000006" height="1.5" fill="#b4c4e4"/>
<rect x="64" y="63.4" width="13.400000000000006" height="1.5" fill="#b4c4e4"/>
<rect x="64" y="65.9" width="13.400000000000006" height="1.5" fill="#b4c4e4"/>
<rect x="64" y="68.4" width="13.400000000000006" height="1.5" fill="#b4c4e4"/>
<rect x="64" y="70.8" width="13.400000000000006" height="1.5" fill="#b4c4e4"/>
<rect x="64" y="73.3" width="13.400000000000006" height="1.5" fill="#b4c4e4"/>
<rect x="126.3" y="55.5" width="18.4" height="21.8" rx="1" fill="#fbfcff" stroke="#9fb0d2" stroke-width="1.2"/>
<rect x="130" y="60.3" width="11" height="1.5" fill="#b4c4e4"/>
<rect x="130" y="62.7" width="11" height="1.5" fill="#b4c4e4"/>
<rect x="130" y="65.1" width="11" height="1.5" fill="#b4c4e4"/>
<rect x="130" y="67.5" width="11" height="1.5" fill="#b4c4e4"/>
<rect x="130" y="69.9" width="11" height="1.5" fill="#b4c4e4"/>
<rect x="130" y="72.3" width="11" height="1.5" fill="#b4c4e4"/>
<rect x="130" y="63.5" width="10" height="1.3" fill="#98b048"/>
<path d="M141.6 59.4h4.2v3.2h3.3v4.1h-3.3v3.3h-4.2v-3.3h-3.3v-4.1h3.3z" fill="url(#gPlus)" stroke="#6a9a38" stroke-width=".7"/>
<rect x="328.2" y="56" width="10" height="10" rx=".8" fill="#fff" stroke="#b4a0a8" stroke-width=".8"/>
<rect x="328.2" y="56" width="10" height="3" fill="#e24a3c"/>
<line x1="330.7" x2="330.7" y1="59.5" y2="66" stroke="#a8c0e8" stroke-width=".7"/>
<line x1="333.2" x2="333.2" y1="59.5" y2="66" stroke="#a8c0e8" stroke-width=".7"/>
<line x1="335.7" x2="335.7" y1="59.5" y2="66" stroke="#a8c0e8" stroke-width=".7"/>
<line x1="328.2" x2="338.2" y1="62.6" y2="62.6" stroke="#a8c0e8" stroke-width=".7"/>
<rect x="342.3" y="56.2" width="10.2" height="10" fill="#cfd0d2" stroke="#8e9096" stroke-width=".9"/>
<path d="M345.3 58.4v5.8M349.3 58.4v5.8M345.3 61.4h4M350.6 60.6v2.4" stroke="#707278" stroke-width="1" fill="none"/>
<path d="M190.6 76.9L184.6 83.4L190.6 89.9" fill="none" stroke="#8c8c8e" stroke-width="2.4"/>
<path d="M195.79999999999998 76.9L189.79999999999998 83.4L195.79999999999998 89.9" fill="none" stroke="#8c8c8e" stroke-width="2.4"/>
<path d="M388.8 76.9L394.8 83.4L388.8 89.9" fill="none" stroke="#8c8c8e" stroke-width="2.4"/>
<path d="M394.0 76.9L400.0 83.4L394.0 89.9" fill="none" stroke="#8c8c8e" stroke-width="2.4"/>
<circle cx="418.9" cy="58.6" r="1.4" fill="#fff" stroke="#3c7cd0" stroke-width=".9"/>
<rect x="421.8" y="57.9" width="7.2" height="1.5" fill="#3a3e48"/>
<circle cx="418.9" cy="62.300000000000004" r="1.4" fill="#fff" stroke="#3c7cd0" stroke-width=".9"/>
<rect x="421.8" y="61.6" width="7.2" height="1.5" fill="#3a3e48"/>
<circle cx="418.9" cy="66.0" r="1.4" fill="#fff" stroke="#3c7cd0" stroke-width=".9"/>
<rect x="421.8" y="65.3" width="7.2" height="1.5" fill="#3a3e48"/>
<path d="M418 79h9.6v2.6h-5.2l3.4 2.8l-3.6 3h5.8v2.6h-10.2v-2.2l4.2-3.4l-4-3.2z" fill="#f3aa2a" stroke="#d88818" stroke-width=".6" stroke-linejoin="round"/>
<rect x="484.6" y="56.4" width="11.4" height="11.4" rx=".8" fill="#fbfcff" stroke="#b8c0d0" stroke-width=".8"/>
<path d="M486 64.6c2.2 0 2.4-1 3.3-3.2s1.6-3 4.6-3" fill="none" stroke="#7a9a3c" stroke-width="1.2"/>
<rect x="484.6" y="78.6" width="11.4" height="11.4" rx=".8" fill="#fbfcff" stroke="#b8c0d0" stroke-width=".8"/>
<line x1="487.2" x2="487.2" y1="80" y2="89.0" stroke="#d83c30" stroke-width=".7"/><rect x="486.2" y="81.6" width="2" height="5.800000000000006" fill="#d83c30"/>
<line x1="490.3" x2="490.3" y1="81.4" y2="89.6" stroke="#d83c30" stroke-width=".7"/><rect x="489.3" y="83.0" width="2" height="4.999999999999995" fill="#d83c30"/>
<line x1="493.4" x2="493.4" y1="79.4" y2="87.6" stroke="#d83c30" stroke-width=".7"/><rect x="492.4" y="81.0" width="2" height="4.999999999999995" fill="#d83c30"/>
<rect x="559.6" y="56.6" width="12" height="11" rx=".8" fill="#fff" stroke="#86aede" stroke-width=".9"/>
<rect x="559.6" y="56.6" width="12" height="2.8" fill="#8cbcec"/>
<line x1="562.6" x2="562.6" y1="59" y2="67.6" stroke="#8ab8e8" stroke-width=".8"/>
<line x1="565.6" x2="565.6" y1="59" y2="67.6" stroke="#8ab8e8" stroke-width=".8"/>
<line x1="568.6" x2="568.6" y1="59" y2="67.6" stroke="#8ab8e8" stroke-width=".8"/>
<line x1="559.6" x2="571.6" y1="62.199999999999996" y2="62.199999999999996" stroke="#8ab8e8" stroke-width=".8"/>
<line x1="559.6" x2="571.6" y1="65.0" y2="65.0" stroke="#8ab8e8" stroke-width=".8"/>
<rect x="560.6" y="78.6" width="10.4" height="11.4" rx=".8" fill="#c6c8cc" stroke="#a2a4aa" stroke-width=".9"/>
<text x="565.8" y="88" font-size="8.5" text-anchor="middle" fill="#eeeeee" font-weight="bold">$</text>
<rect x="643.8" y="56.8" width="11.6" height="9.6" rx=".8" fill="#fff" stroke="#5c96d4" stroke-width=".9"/>
<rect x="643.8" y="56.8" width="11.6" height="3" fill="#4a90dc"/>
<path d="M646.9 65.2Q651.5 61.120000000000005 656.1 65.2Q651.5 69.28 646.9 65.2z" fill="#f4f4f6" stroke="#4a4e5a" stroke-width=".9"/>
<circle cx="651.5" cy="65.2" r="1.9679999999999997" fill="#3a4458"/><circle cx="651.0" cy="64.7" r="0.72" fill="#b8c8e0"/>
<path d="M644.0 84.4Q649.8 79.30000000000001 655.5999999999999 84.4Q649.8 89.5 644.0 84.4z" fill="#f4f4f6" stroke="#4a4e5a" stroke-width=".9"/>
<circle cx="649.8" cy="84.4" r="2.46" fill="#3a4458"/><circle cx="649.3" cy="83.9" r="0.8999999999999999" fill="#b8c8e0"/>
<rect x="730.4" y="56.6" width="11.6" height="11" rx=".8" fill="#e4e5e8" stroke="#a6a8ae" stroke-width=".9"/>
<rect x="730.4" y="56.6" width="11.6" height="2.8" fill="#b4b6bc"/>
<rect x="732.6" y="62" width="1.6" height="3.2" fill="#b4b6bc"/>
<rect x="735.2" y="62" width="1.6" height="3.2" fill="#b4b6bc"/>
<rect x="737.8000000000001" y="62" width="1.6" height="3.2" fill="#b4b6bc"/>
<rect x="730.3" y="78" width="12" height="12" rx="1" fill="#f2a41e"/>
<rect x="730.3" y="88.6" width="12" height="1.6" fill="#d8382c"/><rect x="740.8" y="78" width="1.5" height="12" fill="#e07a20"/>
<circle cx="733.4" cy="86.4" r="1.2" fill="#fff"/><path d="M732.4 82.6a4.6 4.6 0 0 1 4.8 4.8M732.4 80a7.2 7.2 0 0 1 7.4 7.4" fill="none" stroke="#fff" stroke-width="1.3"/>
<path d="M793.2 107.2v3.6h-3.8z" fill="#6a7080"/>
<circle cx="818" cy="66.6" r="12" fill="url(#gP)" stroke="#a4a6aa" stroke-width=".8"/>
<path d="M813.8 60.2v12.6l10-6.3z" fill="#dcdcde" stroke="#c8c8ca" stroke-width=".6"/>
<path d="M911.1 60.1h4.6l-2.3 2.5z" fill="#555c6c"/>
<path d="M220.29999999999998 149.1h4.6l-2.3 2.5z" fill="#555c6c"/>
<path d="M88.5 612.5h4.6l-2.3 2.5z" fill="#555c6c"/>
<path d="M164.29999999999998 612.5h4.6l-2.3 2.5z" fill="#555c6c"/>
<rect x="874" y="83.2" width="5.6" height="1.6" fill="#6e7078"/>
<rect x="883.4" y="83" width="41" height="2" fill="#7c7e86"/><rect x="904.2" y="81.4" width="1.6" height="5.2" fill="#7c7e86"/>
<rect x="924.2" y="79.4" width="3" height="7.6" fill="#fff2b0" stroke="#4a4c54" stroke-width=".8"/>
<path d="M934.2 81v6M931.2 84h6" stroke="#5a5c66" stroke-width="1.8"/><path d="M934.2 82.6v2.8M932.8 84h2.8" stroke="#d5dbe9" stroke-width=".8"/>
<path d="M1033.8 38.6h6.4l-3.2-3.8z" fill="#2c3038"/>
<text x="1059.2" y="42.6" font-size="14.5" font-weight="bold" text-anchor="middle" fill="#6eaae8" stroke="#5a94d8" stroke-width=".3">?</text>
<ellipse cx="1074" cy="98" rx="15" ry="2.6" fill="#b0b4c0" fill-opacity=".4"/>
<g transform="translate(1078 79)"><ellipse rx="24" ry="7.2" fill="none" stroke="#d8a22a" stroke-width="2" transform="rotate(110)"/><ellipse rx="24" ry="7.2" fill="none" stroke="#e4b83c" stroke-width="2" transform="rotate(-20)"/><ellipse rx="24" ry="7.2" fill="none" stroke="#e8c24a" stroke-width="2" transform="rotate(45)"/><ellipse rx="24" ry="7.2" fill="none" stroke="#fbe9a0" stroke-width=".7" transform="rotate(110)"/><ellipse rx="24" ry="7.2" fill="none" stroke="#fbe9a0" stroke-width=".7" transform="rotate(-20)"/><ellipse rx="24" ry="7.2" fill="none" stroke="#fbe9a0" stroke-width=".7" transform="rotate(45)"/><circle cx="-1" cy="0.5" r="8" fill="url(#gS)"/><circle cx="-8.6" cy="-11.8" r="2.5" fill="#d83020"/><circle cx="-9.2" cy="-12.4" r=".9" fill="#f8a090"/></g>
<rect x="339.6" y="144" width="8.6" height="10.6" rx=".8" fill="#fbfcff" stroke="#9fb0d2" stroke-width=".9"/>
<circle cx="347.2" cy="151.4" r="4" fill="#6cb040" stroke="#4a8a2a" stroke-width=".7"/><path d="M347.2 149v4.6M345.2 151l2-2.1l2 2.1" fill="none" stroke="#fff" stroke-width="1.1"/>
<path d="M417 152.6l4.2 4" stroke="#d89040" stroke-width="2.2" stroke-linecap="round"/><circle cx="413.8" cy="149.4" r="4.4" fill="#c4e0fa" stroke="#6a9ad0" stroke-width="1.3"/><circle cx="412.8" cy="148.2" r="1.8" fill="#eef8ff"/>
<rect x="436.6" y="144.6" width="6.6" height="10.8" fill="#fff" stroke="#7a9ad0" stroke-width=".9"/><path d="M436.6 148.2h6.6M436.6 151.8h6.6" stroke="#7a9ad0" stroke-width=".8"/>
<rect x="430.4" y="147" width="6" height="6.2" fill="#8cc04c" stroke="#5c9030" stroke-width=".8"/><rect x="432.2" y="148.8" width="2.4" height="2.6" fill="#d8f0b0"/><path d="M434.6 144.6v11" stroke="#5c7090" stroke-width=".8"/>
<circle cx="459.2" cy="150.5" r="6.5" fill="#dc3030" stroke="#b82020" stroke-width=".8"/><path d="M456.6 147.9l5.2 5.2M461.8 147.9l-5.2 5.2" stroke="#fff" stroke-width="2"/>
<path d="M498.07 149.82 L498.07 150.98 L496.41 151.68 L496.08 152.47 L496.76 154.14 L495.94 154.96 L494.27 154.28 L493.48 154.61 L492.78 156.27 L491.62 156.27 L490.92 154.61 L490.13 154.28 L488.46 154.96 L487.64 154.14 L488.32 152.47 L487.99 151.68 L486.33 150.98 L486.33 149.82 L487.99 149.12 L488.32 148.33 L487.64 146.66 L488.46 145.84 L490.13 146.52 L490.92 146.19 L491.62 144.53 L492.78 144.53 L493.48 146.19 L494.27 146.52 L495.94 145.84 L496.76 146.66 L496.08 148.33 L496.41 149.12z" fill="#a8b4cc" stroke="#7686a8" stroke-width=".8" stroke-linejoin="round"/><circle cx="492.2" cy="150.4" r="2.1" fill="#e8ecf4" stroke="#7686a8" stroke-width=".8"/>
</svg>
</body></html>
